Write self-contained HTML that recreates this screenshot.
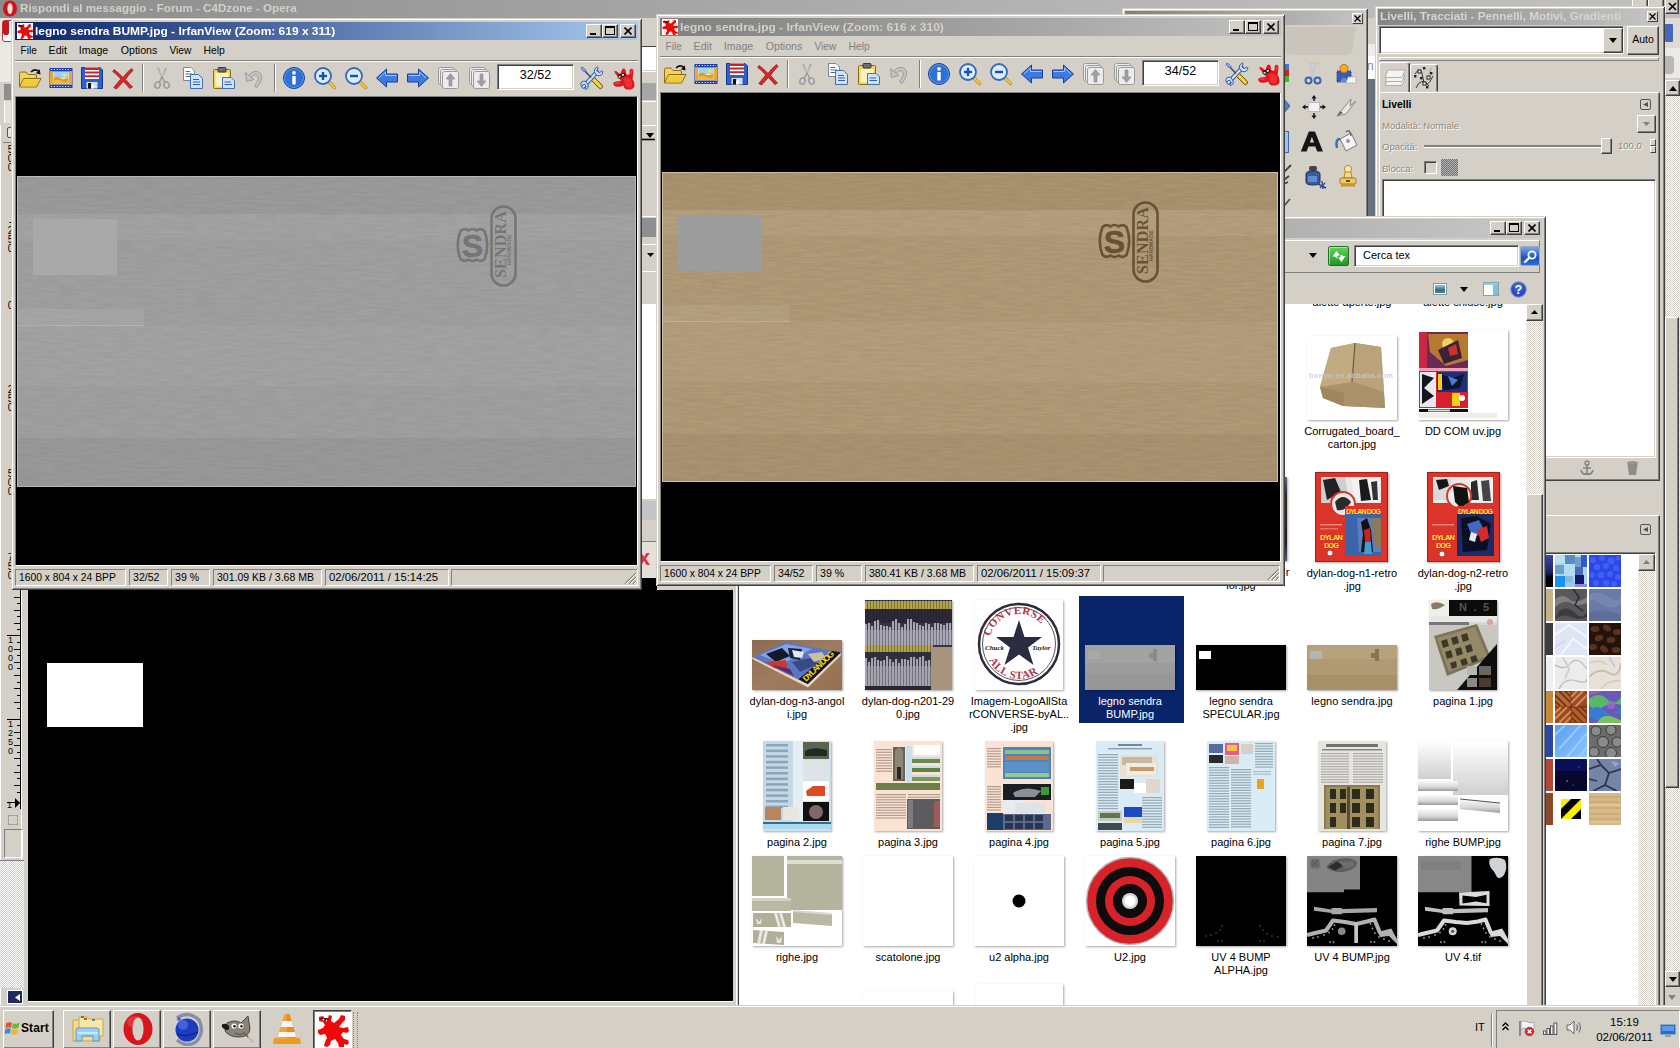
<!DOCTYPE html>
<html lang="it"><head><meta charset="utf-8"><title>Desktop</title>
<style>
html,body{margin:0;padding:0}
body{width:1680px;height:1048px;overflow:hidden;position:relative;background:#d4d0c8;font-family:"Liberation Sans",sans-serif;font-size:11px;line-height:13px;color:#000}
div,span,svg{position:absolute;box-sizing:border-box}
.t{white-space:nowrap}
.win{background:#d4d0c8;box-shadow:inset 1px 1px #d4d0c8,inset -1px -1px #404040,inset 2px 2px #fff,inset -2px -2px #808080}
.tb{height:18px;color:#fff;font-weight:bold}
.tb.act{background:linear-gradient(90deg,#0a246a,#a6caf0)}
.tb.ina{background:linear-gradient(90deg,#808080,#c0c0c0);color:#d4d0c8}
.btn{background:#d4d0c8;border:1px solid;border-color:#fff #404040 #404040 #fff;box-shadow:inset -1px -1px #808080}
.sunk{border:1px solid;border-color:#808080 #fff #fff #808080}
.sunk2{border:1px solid;border-color:#808080 #fff #fff #808080;box-shadow:inset 1px 1px #404040,inset -1px -1px #d4d0c8}
.cell{border:1px solid;border-color:#808080 #fff #fff #808080;height:17px;padding:1px 0 0 3px;white-space:nowrap;overflow:hidden}
.menu span{position:static}
.lbl{text-align:center;width:112px;line-height:13px;font-size:11px}
.th{box-shadow:1px 1px 2px rgba(0,0,0,.35)}
</style></head><body>
<!-- Opera background window -->
<div id="opera" style="left:0;top:0;width:1680px;height:1048px;background:#d4d0c8">
  <div class="tb ina" style="left:0;top:0;width:1680px;height:18px;background:linear-gradient(90deg,#8c8c8c,#b8b8b8 70%,#c0c0c0)"></div>
  <svg style="left:2px;top:0" width="16" height="17" viewBox="0 0 16 17"><ellipse cx="8" cy="8.5" rx="7" ry="8" fill="#d2121b"/><ellipse cx="8" cy="8.5" rx="2.6" ry="5.6" fill="#f4dcdc"/></svg>
  <div class="t" style="left:20px;top:2px;color:#d4d0c8;font-weight:bold;font-size:11px;transform:scaleX(1.055);transform-origin:0 0">Rispondi al messaggio - Forum - C4Dzone - Opera</div>
  <!-- opera top-right buttons -->
  <div class="btn" style="left:1632px;top:-3px;width:16px;height:17px"></div>
  <div class="btn" style="left:1648px;top:-3px;width:16px;height:17px"></div>
  <div class="btn" style="left:1665px;top:-3px;width:14px;height:17px"><svg style="left:2px;top:4px" width="9" height="9" viewBox="0 0 9 9"><path d="M1 1L8 8M8 1L1 8" stroke="#000" stroke-width="1.7"/></svg></div>
  <!-- left strip bits -->
  <div style="left:0;top:18px;width:12px;height:28px;background:#e8e6e0"></div>
  <div style="left:2px;top:20px;width:10px;height:22px;background:#fff;border-radius:3px 0 0 3px;border:1px solid #b33"><div style="left:0;top:0;width:6px;height:14px;border:3px solid #c8161d;border-top:0;border-radius:0 0 6px 6px"></div></div>
  <div style="left:0;top:46px;width:12px;height:36px;background:#ece9e3"></div>
  <div style="left:4px;top:84px;width:8px;height:16px;background:#8f8f8f"></div>
  <div style="left:4px;top:101px;width:8px;height:22px;background:#e4e1da;border-left:1px solid #fff"></div>
  <!-- right strip bits -->
  <div style="left:1664px;top:18px;width:16px;height:30px;background:#dedbd4"></div>
  <div style="left:1665px;top:24px;width:8px;height:18px;background:#4467b8;border-radius:1px"></div>
  <div style="left:1664px;top:48px;width:16px;height:30px;background:#eceae6"></div>
  <div style="left:1664px;top:56px;width:10px;height:18px;background:#b9b8b5;border-radius:0 4px 4px 0"></div>
  <div style="left:1666px;top:96px;width:14px;height:876px;background:repeating-conic-gradient(#fff 0 25%,#d4d0c8 0 50%) 0 0/2px 2px"></div>
  <div class="btn" style="left:1665px;top:80px;width:15px;height:16px"><svg style="left:3px;top:5px" width="8" height="5" viewBox="0 0 8 5"><path d="M0 5L4 0L8 5Z" fill="#000"/></svg></div>
  <div class="btn" style="left:1665px;top:317px;width:14px;height:471px"></div>
  <div class="btn" style="left:1665px;top:971px;width:15px;height:16px"><svg style="left:3px;top:5px" width="8" height="5" viewBox="0 0 8 5"><path d="M0 0L4 5L8 0Z" fill="#000"/></svg></div>
  <svg style="left:1668px;top:995px" width="8" height="5" viewBox="0 0 8 5"><path d="M0 0L4 5L8 0Z" fill="#808080"/></svg>
</div>
<!-- GIMP image window (behind) -->
<div id="gimpimg" style="left:0;top:125px;width:736px;height:881px;background:#d4d0c8">
  <div style="left:0;top:0;width:3px;height:881px;background:#d4d0c8;border-left:1px solid #fff"></div>
  <!-- ruler -->
  <div style="left:20px;top:0;width:1px;height:684px;background:#000"></div>
  <div style="left:21px;top:0;width:7px;height:876px;background:#d4d0c8;border-left:1px solid #fff"></div>
  <div style="left:28px;top:465px;width:705px;height:411px;background:#000"></div>
  <div style="left:47px;top:538px;width:96px;height:64px;background:#fff"></div>
  <div style="left:28px;top:876px;width:705px;height:1px;background:#fff"></div>
  <div style="left:733px;top:465px;width:3px;height:416px;background:#d4d0c8"></div>
  <svg style="left:0;top:0" width="21" height="690" viewBox="0 0 21 690">
    <g stroke="#000" stroke-width="1" shape-rendering="crispEdges">
      <path d="M14 472.5H20M14 485.5H20M17 478.5H20M17 491.5H20M14 498.5H20M17 504.5H20M7 510.5H20M17 517.5H20M14 524.5H20M17 530.5H20M14 537.5H20M17 543.5H20M14 550.5H20M17 557.5H20M14 563.5H20M17 570.5H20M14 577.5H20M17 583.5H20M7 594.5H20M17 600.5H20M14 607.5H20M17 613.5H20M14 620.5H20M17 627.5H20M14 633.5H20M17 640.5H20M14 647.5H20M17 653.5H20M14 660.5H20M17 667.5H20M7 677.5H20"/>
    </g>
    <path d="M15 673L20 678L15 683Z" fill="#000"/>
  </svg>
  <div class="t" style="left:7px;top:511px;width:7px;font-size:9px;line-height:9px;white-space:normal;word-break:break-all;text-align:center">1000</div>
  <div class="t" style="left:7px;top:595px;width:7px;font-size:9px;line-height:9px;white-space:normal;word-break:break-all;text-align:center">1250</div>
  <div class="t" style="left:7px;top:676px;width:7px;font-size:9px;line-height:9px">1</div>
  <!-- upper ruler numbers partially hidden -->
  <div class="t" style="left:7px;top:20px;width:7px;font-size:10px;line-height:9px;white-space:normal;word-break:break-all;text-align:center">500</div>
  <div class="t" style="left:7px;top:92px;width:7px;font-size:10px;line-height:9px;white-space:normal;word-break:break-all;text-align:center">-250</div>
  <div class="t" style="left:7px;top:176px;width:7px;font-size:10px;line-height:9px;white-space:normal;word-break:break-all;text-align:center">0</div>
  <div class="t" style="left:7px;top:260px;width:7px;font-size:10px;line-height:9px;white-space:normal;word-break:break-all;text-align:center">250</div>
  <div class="t" style="left:7px;top:344px;width:7px;font-size:10px;line-height:9px;white-space:normal;word-break:break-all;text-align:center">500</div>
  <div class="t" style="left:7px;top:428px;width:7px;font-size:10px;line-height:9px;white-space:normal;word-break:break-all;text-align:center">750</div>
  <div style="left:3px;top:17px;width:9px;height:1px;background:#808080"></div>
  <div style="left:7px;top:2px;width:6px;height:11px;border:1px solid #555;border-radius:2px;background:#e8e6e0"></div>
  <!-- below ruler -->
  <div style="left:8px;top:690px;width:10px;height:10px;border:1px dashed #fff;outline:1px dashed #999;outline-offset:-1px"></div>
  <div style="left:4px;top:704px;width:19px;height:29px;border:1px solid;border-color:#808080 #fff #fff #808080"></div>
  <div style="left:0;top:735px;width:24px;height:128px;background:repeating-conic-gradient(#fff 0 25%,#d4d0c8 0 50%) 0 0/2px 2px;border-top:1px solid #808080"></div>
  <div style="left:7px;top:865px;width:16px;height:14px;background:#1f2a5e;border:1px solid #fff"><svg style="left:7px;top:3px" width="5" height="7" viewBox="0 0 5 7"><path d="M5 0L0 3.5L5 7Z" fill="#fff"/></svg></div>
</div>
<!-- strip visible between the two IrfanView windows -->
<div id="gap" style="left:641px;top:18px;width:16px;height:572px;background:#d4d0c8;overflow:hidden">
  <div style="left:1px;top:28px;width:14px;height:1px;background:#404040"></div><div style="left:1px;top:29px;width:15px;height:23px;background:#fff"></div>
  <div style="left:0;top:53px;width:16px;height:1px;background:#fff"></div>
  <div style="left:1px;top:65px;width:15px;height:17px;background:#a6a6a6"></div>
  <div style="left:0;top:83px;width:16px;height:1px;background:#fff"></div>
  <div style="left:0;top:107px;width:16px;height:1px;background:#fff"></div>
  <svg style="left:0;top:114px" width="16" height="10" viewBox="0 0 16 10"><path d="M5 1H13L9 6Z" fill="#000"/><path d="M0 7.5H14" stroke="#000" stroke-width="1.6"/></svg>
  <div style="left:0;top:198px;width:16px;height:1px;background:#fff"></div>
  <div style="left:1px;top:200px;width:15px;height:19px;background:#8f8f93"></div>
  <div style="left:0;top:226px;width:16px;height:1px;background:#fff"></div>
  <svg style="left:6px;top:235px" width="7" height="4" viewBox="0 0 7 4"><path d="M0 0H7L3.5 4Z" fill="#000"/></svg>
  <div style="left:0;top:253px;width:16px;height:1px;background:#fff"></div>
  <div style="left:1px;top:286px;width:14px;height:195px;background:#fff"></div>
  <div style="left:1px;top:483px;width:15px;height:19px;background:#c3c3c8"></div>
  <div style="left:0;top:523px;width:16px;height:1px;background:#808080"></div>
  <div style="left:0;top:524px;width:16px;height:36px;background:#e6dfd8"></div>
  <div class="t" style="left:-3px;top:527px;color:#e0303a;font-weight:bold;font-size:22px;line-height:26px">x</div>
  <div style="left:0;top:560px;width:16px;height:12px;background:#000"></div>
</div>
<!-- strip between toolbox and dock -->
<div style="left:1367px;top:18px;width:8px;height:200px;background:#d4d0c8"></div>
<div style="left:1367px;top:44px;width:8px;height:12px;background:#efede8"></div>
<div style="left:1367px;top:56px;width:8px;height:23px;background:#fff"></div>
<div class="t" style="left:1367px;top:60px;width:7px;overflow:hidden;font-size:12px;color:#889">n</div>
<div style="left:1368px;top:79px;width:7px;height:137px;background:#67717f"></div>
<!-- GIMP toolbox window -->
<div id="tbox" class="win" style="left:1122px;top:8px;width:246px;height:420px">
  <div class="tb ina" style="left:3px;top:3px;width:239px;height:14px;background:linear-gradient(90deg,#808080,#c4c4c4)"></div><div id="tbin" style="left:58px;top:-2px;width:188px;height:400px">
  <div class="btn" style="left:172px;top:7px;width:11px;height:11px;box-shadow:none;border-color:#fff #404040 #404040 #fff"><svg style="left:1px;top:1px" width="7" height="7" viewBox="0 0 7 7"><path d="M.5 .5L6.5 6.5M6.5 .5L.5 6.5" stroke="#000" stroke-width="1.2"/></svg></div>
  <!-- wilber drop area -->
  <div style="left:104px;top:21px;width:70px;height:28px;background:#c9c5bd;border-radius:0 0 6px 10px;transform:skewX(-8deg)"></div>
  <!-- partial left column icons -->
  <div style="left:104px;top:58px;width:5px;height:6px;background:#3c78d8"></div>
  <div style="left:104px;top:64px;width:5px;height:6px;background:#d82020"></div>
  <div style="left:104px;top:70px;width:5px;height:6px;background:#40b830"></div>
  <svg style="left:104px;top:93px" width="6" height="14" viewBox="0 0 6 14"><path d="M0 0L6 7L0 14Z" fill="#4a80d0" stroke="#2a5090" stroke-width=".8"/></svg>
  <div style="left:104px;top:125px;width:5px;height:22px;background:#9cc4f0;border:1px solid #3a6ab0;border-left:0"></div>
  <svg style="left:104px;top:158px" width="8" height="22" viewBox="0 0 8 22"><path d="M0 8L7 1M0 16L5 12M0 20L4 18" stroke="#444" stroke-width="1.8"/></svg>
  <svg style="left:104px;top:192px" width="8" height="14" viewBox="0 0 8 14"><path d="M0 8L6 1" stroke="#555" stroke-width="1.8"/></svg>
  <!-- scissors -->
  <svg style="left:122px;top:56px" width="24" height="24" viewBox="0 0 24 24"><path d="M7 1L12 15M14 2L9 15" stroke="#c8c8d0" stroke-width="2.2"/><path d="M9 2Q14 0 19 2" stroke="#e0b030" stroke-width="1" stroke-dasharray="1.5 1.2" fill="none"/><circle cx="6.5" cy="18.5" r="3" fill="none" stroke="#3a62b0" stroke-width="2"/><circle cx="15.5" cy="18.5" r="3" fill="none" stroke="#3a62b0" stroke-width="2"/></svg>
  <!-- foreground select -->
  <svg style="left:155px;top:56px" width="24" height="24" viewBox="0 0 24 24"><rect x="2" y="9" width="14" height="11" fill="#3a5ab8" stroke="#223a80" stroke-dasharray="1.5 1"/><circle cx="9" cy="6.5" r="4.2" fill="#f0a830" stroke="#c07818"/><path d="M5 20Q9 11 13 20Z" fill="#5a8ae0"/><path d="M13 15H21V21H11Z" fill="#f4f4f4" stroke="#aaa" stroke-width=".6"/></svg>
  <!-- move -->
  <svg style="left:121px;top:88px" width="26" height="26" viewBox="0 0 26 26"><rect x="7.5" y="8.5" width="11" height="9" fill="#f2f2f2" stroke="#bbb"/><path d="M13 1L10.5 4.5H15.5ZM13 25L10.5 21.5H15.5ZM1 13L4.5 10.5V15.5ZM25 13L21.5 10.5V15.5Z" fill="#111"/><path d="M13 4V7M13 19V22M4 13H7M19 13H22" stroke="#111" stroke-width="1.4"/></svg>
  <!-- crop/knife -->
  <svg style="left:155px;top:90px" width="24" height="24" viewBox="0 0 24 24"><path d="M2 20L16 3L15 10L21 5L11 18Z" fill="#e8e8e8" stroke="#888" stroke-width="1"/><path d="M2 20L8 17L5 15Z" fill="#666"/></svg>
  <!-- text A -->
  <div class="t" style="left:121px;top:121px;font-family:'Liberation Sans',sans-serif;font-weight:bold;font-size:27px;line-height:30px;color:#151515;-webkit-text-stroke:1.2px #151515;transform:scaleX(1.12);transform-origin:0 0">A</div>
  <!-- bucket -->
  <svg style="left:154px;top:122px" width="26" height="26" viewBox="0 0 26 26"><path d="M6 11L17 5L23 17L12 23Z" fill="#f4f4f4" stroke="#777"/><path d="M3 20Q1 11 6 11" fill="none" stroke="#3a6ab8" stroke-width="2.4"/><path d="M12 4Q16 0 17 8" fill="none" stroke="#555" stroke-width="1.2"/><circle cx="14" cy="13" r="2" fill="#999"/></svg>
  <!-- ink -->
  <svg style="left:122px;top:158px" width="26" height="26" viewBox="0 0 26 26"><rect x="7" y="2" width="8" height="5" rx="2" fill="#444"/><path d="M4 10Q4 7 11 7Q18 7 18 10V18Q18 21 11 21Q4 21 4 18Z" fill="#3a5a98" stroke="#1e2e58"/><rect x="6" y="12" width="9" height="6" fill="#6a9ae0" opacity=".8"/><path d="M16 20L24 24M18 24L23 19M20 17L21 25" stroke="#2a4a98" stroke-width="1.4"/></svg>
  <!-- stamp -->
  <svg style="left:157px;top:158px" width="22" height="24" viewBox="0 0 22 24"><circle cx="11" cy="5" r="3.6" fill="#f6e8b8" stroke="#b88a28"/><path d="M8 8H14L15 14H7Z" fill="#f0d890" stroke="#b88a28"/><rect x="3" y="14" width="16" height="6" rx="1.5" fill="#f0c860" stroke="#a87818"/><rect x="4" y="20" width="14" height="2.5" fill="#c89828"/><path d="M9 17H13" stroke="#333" stroke-width="1.6"/></svg>
</div></div>
<!-- Livelli dock window -->
<div id="dock" class="win" style="left:1375px;top:6px;width:290px;height:1004px">
  <div class="tb ina" style="left:3px;top:3px;width:282px;height:16px;background:linear-gradient(90deg,#858585,#c6c6c6)"></div>
  <div class="t" style="left:5px;top:4px;font-weight:bold;font-size:11px;color:#d8d5cd;transform:scaleX(1.066);transform-origin:0 0">Livelli, Tracciati - Pennelli, Motivi, Gradienti</div>
  <div class="btn" style="left:272px;top:5px;width:11px;height:11px;box-shadow:none"><svg style="left:1px;top:1px" width="7" height="7" viewBox="0 0 7 7"><path d="M.5 .5L6.5 6.5M6.5 .5L.5 6.5" stroke="#000" stroke-width="1.2"/></svg></div>
  <!-- combo -->
  <div class="sunk2" style="left:4px;top:20px;width:245px;height:28px;background:#fff"></div>
  <div class="btn" style="left:228px;top:22px;width:20px;height:25px"><svg style="left:5px;top:9px" width="8" height="5" viewBox="0 0 8 5"><path d="M0 0H8L4 5Z" fill="#000"/></svg></div>
  <div class="btn" style="left:252px;top:20px;width:32px;height:29px;text-align:center;line-height:25px;font-size:10.5px">Auto</div>
  <div style="left:4px;top:51px;width:280px;height:4px;border:1px solid;border-color:#fff #808080 #808080 #fff"></div>
  <!-- tabs -->
  <div style="left:4px;top:56px;width:31px;height:31px;background:#d4d0c8;border:1px solid;border-color:#fff #404040 transparent #fff;border-radius:3px 3px 0 0;box-shadow:inset -1px 0 #808080"></div>
  <svg style="left:9px;top:62px" width="22" height="20" viewBox="0 0 22 20"><g fill="#f4f4f4" stroke="#a8a8a8" stroke-width=".9"><path d="M1 17.5L4 11H21L18 17.5Z"/><path d="M1 13.5L4 7H21L18 13.5Z"/><path d="M1 9.5L4 2H21L18 9.5Z"/></g></svg>
  <div style="left:35px;top:58px;width:28px;height:28px;background:#d4d0c8;border:1px solid;border-color:#fff #404040 transparent #fff;border-radius:3px 3px 0 0;box-shadow:inset -1px 0 #808080"></div>
  <svg style="left:38px;top:60px" width="22" height="24" viewBox="0 0 22 24"><path d="M2 8Q8 -2 10 12T20 10" fill="none" stroke="#333" stroke-width="1"/><path d="M3 22Q8 10 16 20" fill="none" stroke="#333" stroke-width="1"/><path d="M18 2L14 14" stroke="#999" stroke-width=".8"/><g fill="#fff" stroke="#222" stroke-width="1"><rect x="5" y="4" width="3" height="3"/><rect x="14" y="10" width="3" height="3"/><rect x="10" y="16" width="3" height="3"/></g><g fill="#222"><rect x="10" y="1" width="2.4" height="2.4"/><rect x="1" y="9" width="2.4" height="2.4"/><rect x="7" y="11" width="2.4" height="2.4"/><rect x="17" y="6" width="2.4" height="2.4"/><rect x="13" y="20" width="2.4" height="2.4"/></g></svg>
  <!-- layers panel -->
  <div style="left:4px;top:86px;width:281px;height:389px;border:1px solid;border-color:#fff #404040 #404040 #fff;box-shadow:inset -1px -1px #808080"></div>
  <div class="t" style="left:7px;top:92px;font-weight:bold;font-size:10.4px">Livelli</div>
  <div style="left:265px;top:93px;width:11px;height:11px;border:1px solid #555;border-radius:2px"><svg style="left:2px;top:2px" width="5" height="5" viewBox="0 0 5 5"><path d="M5 0L0 2.5L5 5Z" fill="#555"/></svg></div>
  <div class="t" style="left:7px;top:113px;color:#8a8782;text-shadow:1px 1px #fff;font-size:9.5px">Modalità: Normale</div>
  <div class="btn" style="left:262px;top:109px;width:19px;height:18px"><svg style="left:5px;top:6px" width="7" height="4" viewBox="0 0 7 4"><path d="M0 0H7L3.5 4Z" fill="#808080"/></svg></div>
  <div class="t" style="left:7px;top:134px;color:#8a8782;text-shadow:1px 1px #fff;font-size:9.5px">Opacità:</div>
  <div style="left:49px;top:139px;width:178px;height:2px;background:#808080;border-bottom:1px solid #fff;height:3px"></div>
  <div class="btn" style="left:226px;top:132px;width:11px;height:16px"></div>
  <div class="t" style="left:243px;top:133px;color:#8a8782;text-shadow:1px 1px #fff;font-size:9.5px">100,0</div>
  <div class="btn" style="left:275px;top:133px;width:6px;height:7px;box-shadow:none"></div>
  <div class="btn" style="left:275px;top:140px;width:6px;height:7px;box-shadow:none"></div>
  <div class="t" style="left:7px;top:156px;color:#8a8782;text-shadow:1px 1px #fff;font-size:9.5px">Blocca:</div>
  <div class="sunk2" style="left:49px;top:155px;width:13px;height:13px;background:#d4d0c8"></div>
  <div style="left:66px;top:153px;width:17px;height:17px;background:repeating-conic-gradient(#707070 0 25%,#b4b4b4 0 50%) 0 0/2px 2px"></div>
  <div class="sunk2" style="left:7px;top:173px;width:274px;height:279px;background:#fff"></div>
  <!-- panel bottom buttons -->
  <svg style="left:205px;top:454px" width="14" height="16" viewBox="0 0 14 16" opacity=".55"><circle cx="7" cy="3" r="2" fill="none" stroke="#444" stroke-width="1.4"/><path d="M7 5V14M3 8H11M1 10Q2 15 7 14Q12 15 13 10" fill="none" stroke="#444" stroke-width="1.6"/></svg>
  <svg style="left:251px;top:454px" width="13" height="16" viewBox="0 0 13 16" opacity=".55"><ellipse cx="6.5" cy="3" rx="5.5" ry="2" fill="#666"/><path d="M1.5 4L3 15H10L11.500 4Z" fill="#555"/></svg>
  <!-- patterns panel -->
  <div style="left:4px;top:509px;width:281px;height:495px;border:1px solid;border-color:#fff #404040 #404040 #fff;box-shadow:inset -1px -1px #808080"></div>
  <div style="left:265px;top:518px;width:11px;height:11px;border:1px solid #555;border-radius:2px"><svg style="left:2px;top:2px" width="5" height="5" viewBox="0 0 5 5"><path d="M5 0L0 2.5L5 5Z" fill="#555"/></svg></div>
  <div class="sunk2" style="left:7px;top:546px;width:274px;height:456px;background:#fff"></div>
  <div style="left:263px;top:548px;width:17px;height:452px;background:repeating-conic-gradient(#fff 0 25%,#d4d0c8 0 50%) 0 0/2px 2px"></div>
  <div class="btn" style="left:263px;top:548px;width:17px;height:17px"><svg style="left:4px;top:5px" width="7" height="4" viewBox="0 0 7 4"><path d="M0 4L3.5 0L7 4Z" fill="#808080"/></svg></div>
</div>
<!-- GIMP pattern swatches -->
<div style="left:1555px;top:555px;width:32px;height:32px;overflow:hidden"><svg width="32" height="32" viewBox="0 0 32 32" preserveAspectRatio="none"><rect width="32" height="32" fill="#a8d8ea"/><rect x="0" y="0" width="10" height="8" fill="#b8e0ee"/><rect x="10" y="0" width="10" height="9" fill="#5a8ac0"/><rect x="20" y="2" width="8" height="10" fill="#7a9ad0"/><rect x="26" y="0" width="6" height="12" fill="#2a5ad8"/><rect x="0" y="10" width="9" height="9" fill="#6aa0d0"/><rect x="9" y="9" width="11" height="12" fill="#b4dcf0"/><rect x="20" y="12" width="8" height="8" fill="#4a6ab8"/><rect x="0" y="21" width="10" height="11" fill="#1e90f0"/><rect x="10" y="21" width="8" height="6" fill="#8ab8e0"/><rect x="20" y="20" width="9" height="9" fill="#16186a"/><rect x="10" y="27" width="10" height="5" fill="#9ac8e8"/><rect x="20" y="29" width="12" height="3" fill="#8a8ae0"/></svg></div>
<div style="left:1589px;top:555px;width:32px;height:32px;overflow:hidden"><svg width="32" height="32" viewBox="0 0 32 32" preserveAspectRatio="none"><rect width="32" height="32" fill="#2a48e8"/><g fill="#4a68f8" opacity=".7"><circle cx="4" cy="5" r="3"/><circle cx="13" cy="3" r="3"/><circle cx="22" cy="6" r="3.4"/><circle cx="29" cy="3" r="2.6"/><circle cx="8" cy="12" r="3.2"/><circle cx="17" cy="11" r="3"/><circle cx="27" cy="13" r="3"/><circle cx="3" cy="20" r="3"/><circle cx="12" cy="20" r="3.4"/><circle cx="21" cy="19" r="3"/><circle cx="29" cy="22" r="3"/><circle cx="7" cy="28" r="3"/><circle cx="17" cy="28" r="3.2"/><circle cx="25" cy="29" r="3"/></g></svg></div>
<div style="left:1555px;top:589px;width:32px;height:32px;overflow:hidden"><svg width="32" height="32" viewBox="0 0 32 32" preserveAspectRatio="none"><rect width="32" height="32" fill="#58585a"/><path d="M0 10Q8 4 14 10T32 8V14Q22 18 16 14T0 18Z" fill="#808084"/><path d="M4 22Q12 16 20 24T32 22V28Q24 32 16 28T0 30Z" fill="#3c3c40"/><path d="M18 0L24 8L20 16L28 22" stroke="#2a2a2c" stroke-width="1.5" fill="none"/></svg></div>
<div style="left:1589px;top:589px;width:32px;height:32px;overflow:hidden"><svg width="32" height="32" viewBox="0 0 32 32" preserveAspectRatio="none"><rect width="32" height="32" fill="#6a7aa6"/><path d="M0 6Q10 0 20 8T32 4V16Q20 22 10 14T0 18Z" fill="#7c8cb8" opacity=".7"/><path d="M0 24Q12 18 32 26V32H0Z" fill="#5a6a94" opacity=".7"/></svg></div>
<div style="left:1555px;top:623px;width:32px;height:32px;overflow:hidden"><svg width="32" height="32" viewBox="0 0 32 32" preserveAspectRatio="none"><rect width="32" height="32" fill="#dfe4f6"/><path d="M0 12L14 2L32 14M6 32L18 16L32 26" stroke="#f6f8ff" stroke-width="2" fill="none"/><path d="M0 24L10 18" stroke="#c8d0ec" stroke-width="1.4"/></svg></div>
<div style="left:1589px;top:623px;width:32px;height:32px;overflow:hidden"><svg width="32" height="32" viewBox="0 0 32 32" preserveAspectRatio="none"><rect width="32" height="32" fill="#24120c"/><g fill="#5a3220"><ellipse cx="6" cy="6" rx="4.4" ry="3"/><ellipse cx="18" cy="5" rx="4.4" ry="3" transform="rotate(30 18 5)"/><ellipse cx="28" cy="9" rx="4" ry="3"/><ellipse cx="10" cy="15" rx="4.4" ry="3" transform="rotate(-20 10 15)"/><ellipse cx="22" cy="17" rx="4.4" ry="3"/><ellipse cx="4" cy="24" rx="4" ry="3"/><ellipse cx="15" cy="26" rx="4.4" ry="3" transform="rotate(40 15 26)"/><ellipse cx="27" cy="27" rx="4.4" ry="3"/></g></svg></div>
<div style="left:1555px;top:657px;width:32px;height:32px;overflow:hidden"><svg width="32" height="32" viewBox="0 0 32 32" preserveAspectRatio="none"><rect width="32" height="32" fill="#ececec"/><path d="M0 8Q10 14 16 6T32 12M4 32Q10 20 22 24T32 18" stroke="#b8b8b8" stroke-width="1.2" fill="none"/><path d="M8 0L14 12L10 22" stroke="#d0d0d0" stroke-width="2" fill="none"/></svg></div>
<div style="left:1589px;top:657px;width:32px;height:32px;overflow:hidden"><svg width="32" height="32" viewBox="0 0 32 32" preserveAspectRatio="none"><rect width="32" height="32" fill="#e6e2da"/><path d="M0 20Q10 10 20 16T32 6" stroke="#c8c0b0" stroke-width="2" fill="none"/><path d="M0 6Q12 2 18 8M12 32Q20 22 32 24" stroke="#d4cec0" stroke-width="1.6" fill="none"/><path d="M20 0L26 10" stroke="#b8c0d0" stroke-width="1.4"/></svg></div>
<div style="left:1555px;top:691px;width:32px;height:32px;overflow:hidden"><svg width="32" height="32" viewBox="0 0 32 32" preserveAspectRatio="none"><rect width="32" height="32" fill="#9a4a26"/><g stroke="#5a2410" stroke-width=".8"><path d="M0 0L16 0L16 16L0 16Z" fill="#b86a38"/><path d="M16 16H32V32H16Z" fill="#b4602e"/></g><path d="M0 4L12 16M0 10L6 16M4 0L16 12M10 0L16 6" stroke="#7a3818" stroke-width="2"/><path d="M16 4L28 16M16 10L22 16M20 0L32 12" stroke="#d88a50" stroke-width="2" transform="translate(0,0) scale(1,-1) translate(0,-16)"/><path d="M16 20L28 32M16 26L22 32M20 16L32 28M26 16L32 22" stroke="#7a3818" stroke-width="2"/><path d="M0 28L12 16M0 22L6 16M4 32L16 20M10 32L16 26" stroke="#d88a50" stroke-width="2"/></svg></div>
<div style="left:1589px;top:691px;width:32px;height:32px;overflow:hidden"><svg width="32" height="32" viewBox="0 0 32 32" preserveAspectRatio="none"><rect width="32" height="32" fill="#6a5ab8"/><path d="M0 8Q10 0 18 8T32 6V14Q22 10 14 16T0 14Z" fill="#58b868"/><path d="M0 20Q8 12 16 20T32 16V24Q24 20 16 26T0 26Z" fill="#3a7ad0"/><path d="M8 32Q14 22 24 26T32 30V32Z" fill="#78c060"/><path d="M0 0H12Q6 4 0 4Z" fill="#a05ab0"/><circle cx="22" cy="14" r="4" fill="#9a6ac8" opacity=".8"/></svg></div>
<div style="left:1555px;top:725px;width:32px;height:32px;overflow:hidden"><svg width="32" height="32" viewBox="0 0 32 32" preserveAspectRatio="none"><defs><linearGradient id="sk1" x1="0" y1="0" x2="1" y2="1"><stop offset="0" stop-color="#5a9ef0"/><stop offset="1" stop-color="#8ec4ff"/></linearGradient></defs><rect width="32" height="32" fill="url(#sk1)"/><path d="M0 10L10 0M4 24L26 0M12 32L32 8M24 32L32 22" stroke="#b4d8ff" stroke-width="2" opacity=".6"/></svg></div>
<div style="left:1589px;top:725px;width:32px;height:32px;overflow:hidden"><svg width="32" height="32" viewBox="0 0 32 32" preserveAspectRatio="none"><rect width="32" height="32" fill="#6c6c6c"/><g fill="#8a8a8a" stroke="#3a3a3a" stroke-width="1"><circle cx="7" cy="6" r="5"/><circle cx="22" cy="5" r="5"/><circle cx="14" cy="17" r="5.5"/><circle cx="28" cy="17" r="5"/><circle cx="5" cy="27" r="5"/><circle cx="22" cy="28" r="5.5"/></g></svg></div>
<div style="left:1555px;top:759px;width:32px;height:32px;overflow:hidden"><svg width="32" height="32" viewBox="0 0 32 32" preserveAspectRatio="none"><rect width="32" height="32" fill="#06062e"/><rect y="0" width="32" height="12" fill="#0a1058"/><circle cx="12" cy="22" r=".8" fill="#aab"/><circle cx="24" cy="8" r=".6" fill="#99b"/><circle cx="18" cy="26" r=".6" fill="#889"/></svg></div>
<div style="left:1589px;top:759px;width:32px;height:32px;overflow:hidden"><svg width="32" height="32" viewBox="0 0 32 32" preserveAspectRatio="none"><rect width="32" height="32" fill="#7486a8"/><path d="M0 10L12 6L20 14L32 10M12 6L8 0M20 14L16 26L4 32M16 26L28 32" stroke="#2c3448" stroke-width="1.8" fill="none"/><path d="M0 20L8 22" stroke="#2c3448" stroke-width="1.4"/><path d="M22 2L30 4L26 8Z" fill="#94a6c8"/></svg></div>
<div style="left:1589px;top:793px;width:32px;height:32px;overflow:hidden"><svg width="32" height="32" viewBox="0 0 32 32" preserveAspectRatio="none"><rect width="32" height="32" fill="#d8b888"/><path d="M0 4H32M0 9H32M0 15H32M0 21H32M0 26H32" stroke="#c4a070" stroke-width="1.4" opacity=".7"/><path d="M0 12H32M0 29H32" stroke="#e8cca0" stroke-width="1.6" opacity=".8"/></svg></div>
<div style="left:1561px;top:799px;width:20px;height:20px;overflow:hidden"><svg width="20" height="20" viewBox="0 0 20 20"><rect width="20" height="20" fill="#f8f000"/><path d="M-2 12L12 -2L22 -2L-2 22ZM8 22L22 8V18L18 22Z" fill="#000"/></svg></div>
<div style="left:1546px;top:555px;width:7px;height:32px;background:linear-gradient(180deg,#3a4aa8,#1a2060 55%,#000 70%)"></div>
<div style="left:1546px;top:589px;width:7px;height:32px;background:#c8b088"></div>
<div style="left:1546px;top:623px;width:7px;height:32px;background:#3c3c3e"></div>
<div style="left:1546px;top:657px;width:7px;height:32px;background:#eeeeee"></div>
<div style="left:1546px;top:691px;width:7px;height:32px;background:#c8883a"></div>
<div style="left:1546px;top:725px;width:7px;height:32px;background:#2a48a0"></div>
<div style="left:1546px;top:759px;width:7px;height:32px;background:#b04838"></div>
<div style="left:1546px;top:793px;width:7px;height:32px;background:#8a4828"></div>
<!-- Explorer window -->
<div id="expl" class="win" style="left:735px;top:216px;width:811px;height:800px">
<div class="tb ina" style="left:4px;top:3px;width:803px;height:19px;background:linear-gradient(90deg,#808080,#c8c8c8)"></div>
<div class="btn" style="left:789px;top:5px;width:16px;height:14px"><svg style="left:3px;top:2px" width="8" height="8" viewBox="0 0 8 8"><path d="M0.5 0.5L7.5 7.5M7.5 0.5L0.5 7.5" stroke="#000" stroke-width="1.6"/></svg></div>
<div class="btn" style="left:771px;top:5px;width:16px;height:14px"><div style="left:2px;top:1px;width:10px;height:9px;border:1px solid #000;border-top-width:2px"></div></div>
<div class="btn" style="left:755px;top:5px;width:16px;height:14px"><div style="left:3px;top:8px;width:6px;height:2px;background:#000"></div></div>
<div style="left:4px;top:24px;width:801px;height:33px;border:1px solid;border-color:#fff #808080 #808080 #fff"></div>
<svg style="left:574px;top:37px" width="8" height="5" viewBox="0 0 8 5"><path d="M0 0H8L4 5Z" fill="#000"/></svg>
<div style="left:593px;top:30px;width:21px;height:20px;background:linear-gradient(180deg,#5fd45a,#1e9a22);border:1px solid #2a6a2a;border-radius:2px;box-shadow:inset 1px 1px rgba(255,255,255,.5)"><svg style="left:2px;top:2px" width="16" height="15" viewBox="0 0 16 15"><path d="M1.500 7.500L5.500 2L9 6.500H6.800L6 9.500L3.600 7.500Z" fill="#fff"/><path d="M14.500 7L10.500 13L7 8.500H9.200L10 5.500L12.400 7Z" fill="#fff"/></svg></div>
<div class="sunk2" style="left:619px;top:29px;width:165px;height:22px;background:#fff;font-size:11px;line-height:18px;padding-left:8px">Cerca tex</div>
<div style="left:785px;top:30px;width:20px;height:20px;background:linear-gradient(180deg,#7aa8ee,#1c4fc0 60%,#2a6ae0);border:1px solid #9ab;border-radius:2px"><svg style="left:2px;top:2px" width="15" height="15" viewBox="0 0 15 15"><circle cx="9" cy="6" r="3.6" fill="none" stroke="#fff" stroke-width="1.8"/><path d="M6.5 8.5L2 13" stroke="#fff" stroke-width="2.4" stroke-linecap="round"/></svg></div>
<div style="left:698px;top:67px;width:14px;height:12px;background:#fff;border:1px solid #7a9ac0"><div style="left:1px;top:1px;width:10px;height:8px;background:linear-gradient(180deg,#9cc8e8,#3a6a8a 60%,#5a8a5a)"></div></div>
<svg style="left:725px;top:71px" width="8" height="5" viewBox="0 0 8 5"><path d="M0 0H8L4 5Z" fill="#000"/></svg>
<div style="left:748px;top:66px;width:16px;height:14px;background:#fff;border:1px solid #7aa;"><div style="left:9px;top:2px;width:5px;height:10px;background:#7ec0d8"></div><div style="left:0;top:0;width:14px;height:2px;background:#9cd"></div></div>
<svg style="left:775px;top:65px" width="17" height="17" viewBox="0 0 17 17"><circle cx="8.5" cy="8.5" r="7.8" fill="#2a4cc0" stroke="#8a9ad0"/><circle cx="8.5" cy="6" r="5" fill="#5a7ae0" opacity=".5"/><text x="8.5" y="13" text-anchor="middle" font-family="Liberation Sans,sans-serif" font-weight="bold" font-size="12" fill="#fff">?</text></svg>
<div id="flist" style="left:3px;top:88px;width:788px;height:702px;background:#fff;overflow:hidden;border-left:1px solid #404040">
<div class="t lbl" style="left:557px;top:-8px">alette aperte.jpg</div>
<div class="t lbl" style="left:668px;top:-8px">alette chiuse.jpg</div>
<div class="t lbl" style="left:446px;top:262px">dylan-dog-n1-ante-r<br>ior.jpg</div>
<div class="th" style="left:568px;top:32px;width:90px;height:84px"><svg width="90" height="84" viewBox="0 0 90 84" preserveAspectRatio="none" ><rect width="90" height="84" fill="#fff"/><path d="M13 51L24 12L48 7L74 11L78 72L36 70Z" fill="#b39a73"/><path d="M24 12L48 7L46 46L13 51Z" fill="#c2aa83"/><path d="M48 7L74 11L77 56L46 46Z" fill="#baa27b"/><path d="M13 51L46 46L77 56L78 72L36 70L16 62Z" fill="#ab916a"/><path d="M13 51L16 62L36 70L37 57Z" fill="#a0865f"/><path d="M48 7L45 46" stroke="#6d5a3c" stroke-width="1.2"/><text x="2" y="42" font-family="Liberation Sans,sans-serif" font-weight="bold" font-size="7.5" fill="#c9c9cf" opacity=".85" textLength="84">bonyu.en.alibaba.com</text></svg></div>
<div class="t lbl" style="left:557px;top:121px;">Corrugated_board_<br>carton.jpg</div>
<div class="th" style="left:679px;top:26px;width:90px;height:90px"><svg width="90" height="90" viewBox="0 0 90 90" preserveAspectRatio="none" ><rect width="90" height="90" fill="#fff"/><rect x="1" y="2" width="49" height="36" fill="#6a2a58"/><path d="M10 4H50V30L28 36L12 22Z" fill="#b8792e"/><circle cx="30" cy="14" r="6" fill="#f0d060"/><path d="M20 20L40 10L44 28L26 34Z" fill="#3a2238"/><path d="M30 18L38 14L40 24L32 26Z" fill="#d03030"/><rect x="1" y="2" width="8" height="36" fill="#c62846"/><rect x="1" y="38" width="49" height="3" fill="#f4a0b0"/><rect x="1" y="41" width="49" height="37" fill="#d8202c"/><rect x="2" y="42" width="16" height="35" fill="#e8e8ee"/><path d="M4 44L16 48L6 58L16 66L4 74Z" fill="#151520"/><rect x="19" y="42" width="30" height="20" fill="#1c2f7a"/><path d="M22 44L34 48L46 44L42 58L26 60Z" fill="#0e1430"/><path d="M30 46L40 50L34 56Z" fill="#4a7ad0"/><rect x="20" y="44" width="4" height="16" fill="#f0d020"/><rect x="34" y="63" width="8" height="13" fill="#f0d020"/><circle cx="44" cy="68" r="3" fill="#fff"/><rect x="1" y="79" width="49" height="3" fill="#111"/><rect x="10" y="79.5" width="22" height="2" fill="#ddd"/><rect x="1" y="83" width="78" height="5" fill="#efeee6"/></svg></div>
<div class="t lbl" style="left:668px;top:121px;">DD COM uv.jpg</div>
<div class="th" style="left:576px;top:168px;width:73px;height:90px"><svg width="73" height="90" viewBox="0 0 73 90" preserveAspectRatio="none" ><rect width="73" height="90" fill="#dc3428"/><rect x="0" y="0" width="73" height="90" fill="none" stroke="#a81c1c" stroke-width="2"/><rect x="6" y="5" width="60" height="26" fill="#e9e9e9"/><path d="M6 5H30L34 31H6Z" fill="#cfcfcf"/><path d="M8 8L20 6L26 20L12 28Z" fill="#222"/><path d="M36 6H64V30H40Z" fill="#f2f2f2"/><path d="M44 8L52 7L56 28L46 29Z" fill="#1a1a1a"/><path d="M56 10L62 9L63 28L58 28Z" fill="#333"/><circle cx="28" cy="32" r="12" fill="#e8e8e8" stroke="#dc3428" stroke-width="2"/><path d="M20 30Q28 20 36 30Q30 40 22 38Z" fill="#2a2a2a"/><rect x="30" y="34" width="37" height="50" fill="#3d64a8"/><rect x="30" y="34" width="37" height="8" fill="#dc3428"/><text x="31" y="42" font-family="Liberation Sans,sans-serif" font-weight="bold" font-size="7" fill="#f3e23a" textLength="35">DYLAN DOG</text><path d="M42 46H66V80H44Z" fill="#5a7fbe"/><path d="M46 50L52 46L56 58L58 80H46L48 62Z" fill="#111"/><path d="M49 58L55 56L56 70H50Z" fill="#d02020"/><path d="M50 70H56L57 82H49Z" fill="#3aa0d8"/><path d="M56 46H66V76H60Z" fill="#8a7a5a"/><text x="5" y="68" font-family="Liberation Sans,sans-serif" font-weight="bold" font-size="7.5" fill="#f3e23a" textLength="23">DYLAN</text><text x="9" y="76" font-family="Liberation Sans,sans-serif" font-weight="bold" font-size="7.5" fill="#f3e23a" textLength="15">DOG</text><circle cx="15" cy="81" r="3" fill="#fff" stroke="#c33"/><rect x="5" y="52" width="22" height="1.5" fill="#f4b0a0" opacity=".7"/><rect x="5" y="56" width="18" height="1.5" fill="#f4b0a0" opacity=".5"/></svg></div>
<div class="t lbl" style="left:557px;top:263px;">dylan-dog-n1-retro<br>.jpg</div>
<div class="th" style="left:688px;top:168px;width:73px;height:90px"><svg width="73" height="90" viewBox="0 0 73 90" preserveAspectRatio="none" ><rect width="73" height="90" fill="#dc3428"/><rect x="0" y="0" width="73" height="90" fill="none" stroke="#a81c1c" stroke-width="2"/><rect x="6" y="5" width="60" height="26" fill="#e9e9e9"/><path d="M7 6H24V28H7Z" fill="#dadada"/><path d="M9 8L20 7L22 14L12 18Z" fill="#161616"/><path d="M40 6H66V30H42Z" fill="#f0f0f0"/><path d="M44 10L50 8L52 28L44 28Z" fill="#2a2a2a"/><path d="M54 9L62 8L64 29L56 29Z" fill="#444"/><circle cx="32" cy="24" r="12" fill="#ededed" stroke="#dc3428" stroke-width="2"/><path d="M26 14L40 16L42 30L34 36L28 30Z" fill="#111"/><rect x="30" y="34" width="37" height="50" fill="#1c2a66"/><rect x="30" y="34" width="37" height="8" fill="#dc3428"/><text x="31" y="42" font-family="Liberation Sans,sans-serif" font-weight="bold" font-size="7" fill="#f3e23a" textLength="35">DYLAN DOG</text><path d="M34 46L50 44L64 52L60 78L36 80Z" fill="#0b0f24"/><path d="M40 52L52 48L58 60L46 66Z" fill="#4068c0"/><path d="M50 58L60 54L62 66L54 70Z" fill="#d82a2a"/><path d="M44 60L50 62L48 70L42 68Z" fill="#e8e8f0"/><text x="5" y="68" font-family="Liberation Sans,sans-serif" font-weight="bold" font-size="7.5" fill="#f3e23a" textLength="23">DYLAN</text><text x="9" y="76" font-family="Liberation Sans,sans-serif" font-weight="bold" font-size="7.5" fill="#f3e23a" textLength="15">DOG</text><circle cx="15" cy="82" r="3" fill="#fff" stroke="#c33"/><rect x="5" y="52" width="22" height="1.5" fill="#f4b0a0" opacity=".7"/></svg></div>
<div class="t lbl" style="left:668px;top:263px;">dylan-dog-n2-retro<br>.jpg</div>
<div class="th" style="left:13px;top:336px;width:90px;height:50px"><svg width="90" height="50" viewBox="0 0 90 50" preserveAspectRatio="none" ><defs><linearGradient id="wd3" x1="0" y1="0" x2="1" y2="1"><stop offset="0" stop-color="#8a6a50"/><stop offset=".5" stop-color="#a07c5e"/><stop offset="1" stop-color="#94704f"/></linearGradient></defs><rect width="90" height="50" fill="url(#wd3)"/><path d="M0.500 19L56 47.500L88.700 15.500L88.700 12.400L55.800 44L0.500 17Z" fill="#e4d8bc"/><path d="M0.500 17L34 2L88.700 12.400L55.800 44Z" fill="#5a76c4"/><path d="M8 15L34 4L60 9L30 24Z" fill="#86a4e4"/><path d="M14 14L30 8L38 16L24 22Z" fill="#14182c"/><path d="M36 8L50 9L48 20L38 18Z" fill="#1c2038"/><path d="M40 10L52 12L50 18L42 17Z" fill="#dce8f4"/><path d="M14 22L34 20L36 30L22 28Z" fill="#c83a30"/><path d="M20 25L38 29L42 36L28 29.500Z" fill="#5a2a6a"/><path d="M40 22L58 18L66 24L48 32Z" fill="#3a4a86"/><path d="M56 14L70 12L74 18L62 22Z" fill="#c8c0a0"/><path d="M46.500 39.300L55.800 44L88.700 12.400L80 10.800Z" fill="#15131c"/><text transform="translate(54,42) rotate(-43.800)" font-family="Liberation Sans,sans-serif" font-weight="bold" font-size="8.500" fill="#f8d820" textLength="40">DYLAN DOG</text></svg></div>
<div class="t lbl" style="left:2px;top:391px;">dylan-dog-n3-angol<br>i.jpg</div>
<div class="th" style="left:126px;top:296px;width:87px;height:90px"><svg width="87" height="90" viewBox="0 0 87 90" preserveAspectRatio="none" ><rect width="87" height="90" fill="#3a3848"/><rect x="0" y="1" width="87" height="8" fill="#b4a648"/><rect x="0" y="9" width="87" height="14" fill="#2c2838"/><rect x="0" y="30" width="87" height="15" fill="#a8a8b4"/><rect x="0" y="24" width="2.200" height="6" fill="#b4b4c0" opacity=".9"/><rect x="3" y="23" width="2.200" height="7" fill="#b4b4c0" opacity=".9"/><rect x="6" y="26" width="2.200" height="4" fill="#b4b4c0" opacity=".9"/><rect x="9" y="21" width="2.200" height="9" fill="#b4b4c0" opacity=".9"/><rect x="12" y="20" width="2.200" height="10" fill="#b4b4c0" opacity=".9"/><rect x="15" y="25" width="2.200" height="5" fill="#b4b4c0" opacity=".9"/><rect x="18" y="26" width="2.200" height="4" fill="#b4b4c0" opacity=".9"/><rect x="21" y="26" width="2.200" height="4" fill="#b4b4c0" opacity=".9"/><rect x="24" y="27" width="2.200" height="3" fill="#b4b4c0" opacity=".9"/><rect x="27" y="21" width="2.200" height="9" fill="#b4b4c0" opacity=".9"/><rect x="30" y="19" width="2.200" height="11" fill="#b4b4c0" opacity=".9"/><rect x="33" y="23" width="2.200" height="7" fill="#b4b4c0" opacity=".9"/><rect x="36" y="27" width="2.200" height="3" fill="#b4b4c0" opacity=".9"/><rect x="39" y="24" width="2.200" height="6" fill="#b4b4c0" opacity=".9"/><rect x="42" y="19" width="2.200" height="11" fill="#b4b4c0" opacity=".9"/><rect x="45" y="19" width="2.200" height="11" fill="#b4b4c0" opacity=".9"/><rect x="48" y="22" width="2.200" height="8" fill="#b4b4c0" opacity=".9"/><rect x="51" y="23" width="2.200" height="7" fill="#b4b4c0" opacity=".9"/><rect x="54" y="25" width="2.200" height="5" fill="#b4b4c0" opacity=".9"/><rect x="57" y="26" width="2.200" height="4" fill="#b4b4c0" opacity=".9"/><rect x="60" y="23" width="2.200" height="7" fill="#b4b4c0" opacity=".9"/><rect x="63" y="24" width="2.200" height="6" fill="#b4b4c0" opacity=".9"/><rect x="66" y="27" width="2.200" height="3" fill="#b4b4c0" opacity=".9"/><rect x="69" y="23" width="2.200" height="7" fill="#b4b4c0" opacity=".9"/><rect x="72" y="23" width="2.200" height="7" fill="#b4b4c0" opacity=".9"/><rect x="75" y="24" width="2.200" height="6" fill="#b4b4c0" opacity=".9"/><rect x="78" y="25" width="2.200" height="5" fill="#b4b4c0" opacity=".9"/><rect x="81" y="23" width="2.200" height="7" fill="#b4b4c0" opacity=".9"/><rect x="84" y="23" width="2.200" height="7" fill="#b4b4c0" opacity=".9"/><rect x="0" y="45" width="68" height="7" fill="#b4a648"/><rect x="0" y="52" width="68" height="8" fill="#343040"/><rect x="0" y="66" width="68" height="20" fill="#a4a4b0"/><rect x="0" y="58" width="2.200" height="8" fill="#b0b0bc" opacity=".9"/><rect x="3" y="62" width="2.200" height="4" fill="#b0b0bc" opacity=".9"/><rect x="6" y="58" width="2.200" height="8" fill="#b0b0bc" opacity=".9"/><rect x="9" y="57" width="2.200" height="9" fill="#b0b0bc" opacity=".9"/><rect x="12" y="60" width="2.200" height="6" fill="#b0b0bc" opacity=".9"/><rect x="15" y="61" width="2.200" height="5" fill="#b0b0bc" opacity=".9"/><rect x="18" y="60" width="2.200" height="6" fill="#b0b0bc" opacity=".9"/><rect x="21" y="56" width="2.200" height="10" fill="#b0b0bc" opacity=".9"/><rect x="24" y="59" width="2.200" height="7" fill="#b0b0bc" opacity=".9"/><rect x="27" y="62" width="2.200" height="4" fill="#b0b0bc" opacity=".9"/><rect x="30" y="59" width="2.200" height="7" fill="#b0b0bc" opacity=".9"/><rect x="33" y="63" width="2.200" height="3" fill="#b0b0bc" opacity=".9"/><rect x="36" y="59" width="2.200" height="7" fill="#b0b0bc" opacity=".9"/><rect x="39" y="59" width="2.200" height="7" fill="#b0b0bc" opacity=".9"/><rect x="42" y="60" width="2.200" height="6" fill="#b0b0bc" opacity=".9"/><rect x="45" y="57" width="2.200" height="9" fill="#b0b0bc" opacity=".9"/><rect x="48" y="57" width="2.200" height="9" fill="#b0b0bc" opacity=".9"/><rect x="51" y="59" width="2.200" height="7" fill="#b0b0bc" opacity=".9"/><rect x="54" y="57" width="2.200" height="9" fill="#b0b0bc" opacity=".9"/><rect x="57" y="56" width="2.200" height="10" fill="#b0b0bc" opacity=".9"/><rect x="60" y="61" width="2.200" height="5" fill="#b0b0bc" opacity=".9"/><rect x="63" y="60" width="2.200" height="6" fill="#b0b0bc" opacity=".9"/><rect x="66" y="59" width="2.200" height="7" fill="#b0b0bc" opacity=".9"/><rect x="2.3" y="0" width=".7" height="90" fill="#24222c" opacity=".55"/><rect x="5.3" y="0" width=".7" height="90" fill="#24222c" opacity=".55"/><rect x="8.3" y="0" width=".7" height="90" fill="#24222c" opacity=".55"/><rect x="11.3" y="0" width=".7" height="90" fill="#24222c" opacity=".55"/><rect x="14.3" y="0" width=".7" height="90" fill="#24222c" opacity=".55"/><rect x="17.3" y="0" width=".7" height="90" fill="#24222c" opacity=".55"/><rect x="20.3" y="0" width=".7" height="90" fill="#24222c" opacity=".55"/><rect x="23.3" y="0" width=".7" height="90" fill="#24222c" opacity=".55"/><rect x="26.3" y="0" width=".7" height="90" fill="#24222c" opacity=".55"/><rect x="29.3" y="0" width=".7" height="90" fill="#24222c" opacity=".55"/><rect x="32.3" y="0" width=".7" height="90" fill="#24222c" opacity=".55"/><rect x="35.3" y="0" width=".7" height="90" fill="#24222c" opacity=".55"/><rect x="38.3" y="0" width=".7" height="90" fill="#24222c" opacity=".55"/><rect x="41.3" y="0" width=".7" height="90" fill="#24222c" opacity=".55"/><rect x="44.3" y="0" width=".7" height="90" fill="#24222c" opacity=".55"/><rect x="47.3" y="0" width=".7" height="90" fill="#24222c" opacity=".55"/><rect x="50.3" y="0" width=".7" height="90" fill="#24222c" opacity=".55"/><rect x="53.3" y="0" width=".7" height="90" fill="#24222c" opacity=".55"/><rect x="56.3" y="0" width=".7" height="90" fill="#24222c" opacity=".55"/><rect x="59.3" y="0" width=".7" height="90" fill="#24222c" opacity=".55"/><rect x="62.3" y="0" width=".7" height="90" fill="#24222c" opacity=".55"/><rect x="65.3" y="0" width=".7" height="90" fill="#24222c" opacity=".55"/><rect x="68.3" y="0" width=".7" height="90" fill="#24222c" opacity=".55"/><rect x="71.3" y="0" width=".7" height="90" fill="#24222c" opacity=".55"/><rect x="74.3" y="0" width=".7" height="90" fill="#24222c" opacity=".55"/><rect x="77.3" y="0" width=".7" height="90" fill="#24222c" opacity=".55"/><rect x="80.3" y="0" width=".7" height="90" fill="#24222c" opacity=".55"/><rect x="83.3" y="0" width=".7" height="90" fill="#24222c" opacity=".55"/><rect x="86.3" y="0" width=".7" height="90" fill="#24222c" opacity=".55"/><rect x="0" y="86" width="68" height="4" fill="#2a2630"/><rect x="66" y="47" width="21" height="43" fill="#a8947e"/></svg></div>
<div class="t lbl" style="left:113px;top:391px;">dylan-dog-n201-29<br>0.jpg</div>
<div class="th" style="left:236px;top:296px;width:88px;height:90px"><svg width="88" height="90" viewBox="0 0 88 90" preserveAspectRatio="none" ><rect width="88" height="90" fill="#fff"/><circle cx="44" cy="44" r="40" fill="#fff" stroke="#2a2c3a" stroke-width="2.5"/><circle cx="44" cy="44" r="36.5" fill="none" stroke="#2a2c3a" stroke-width=".8"/><path d="M44 20L49.5 37H67L53 47.5L58.5 65L44 54.5L29.5 65L35 47.5L21 37H38.5Z" fill="#2a2c42"/><path id="cvt" d="M14 44A30 30 0 0 1 74 44" fill="none"/><text font-family="Liberation Serif,serif" font-weight="bold" font-size="11" fill="#b8323e" letter-spacing=".5"><textPath href="#cvt" startOffset="8%">CONVERSE</textPath></text><path id="cvb" d="M11 46A33 33 0 0 0 77 46" fill="none"/><text font-family="Liberation Serif,serif" font-weight="bold" font-size="11" fill="#b8323e" letter-spacing=".6"><textPath href="#cvb" startOffset="14%">ALL STAR</textPath></text><text x="10" y="50" font-family="Liberation Serif,serif" font-style="italic" font-weight="bold" font-size="7" fill="#222">Chuck</text><text x="57" y="50" font-family="Liberation Serif,serif" font-style="italic" font-weight="bold" font-size="7" fill="#222">Taylor</text></svg></div>
<div class="t lbl" style="left:224px;top:391px;">Imagem-LogoAllSta<br>rCONVERSE-byAL..<br>.jpg</div>
<div style="left:340px;top:292px;width:105px;height:127px;background:#0a246a"></div>
<div class="th" style="left:346px;top:341px;width:90px;height:45px"><svg width="90" height="45" viewBox="0 0 90 45" preserveAspectRatio="none" ><rect width="90" height="45" fill="#9c9c9c"/><rect y="0" width="90" height="18" fill="#a2a2a2"/><rect y="28" width="90" height="17" fill="#979797"/><rect x="3" y="6" width="12" height="8" fill="#a9a9a9"/><rect x="68" y="4" width="4" height="12" fill="#8a8a8a"/><rect x="64" y="8" width="4" height="5" fill="#8e8e8e"/></svg></div>
<div class="t lbl" style="left:335px;top:391px;color:#fff;">legno sendra<br>BUMP.jpg</div>
<div class="th" style="left:457px;top:341px;width:90px;height:45px"><svg width="90" height="45" viewBox="0 0 90 45" preserveAspectRatio="none" ><rect width="90" height="45" fill="#000"/><rect x="3" y="6" width="12" height="8" fill="#fff"/></svg></div>
<div class="t lbl" style="left:446px;top:391px;">legno sendra<br>SPECULAR.jpg</div>
<div class="th" style="left:568px;top:341px;width:90px;height:45px"><svg width="90" height="45" viewBox="0 0 90 45" preserveAspectRatio="none" ><rect width="90" height="45" fill="#b09a74"/><rect y="0" width="90" height="14" fill="#b8a27c"/><rect y="30" width="90" height="15" fill="#a89068"/><rect x="3" y="6" width="12" height="8" fill="#b4b4b4"/><rect x="68" y="4" width="4" height="12" fill="#8a7452"/><rect x="64" y="8" width="4" height="5" fill="#8a7452"/></svg></div>
<div class="t lbl" style="left:557px;top:391px;">legno sendra.jpg</div>
<div class="th" style="left:690px;top:296px;width:68px;height:90px"><svg width="68" height="90" viewBox="0 0 68 90" preserveAspectRatio="none" ><rect width="68" height="90" fill="#d8d6d2"/><rect x="0" y="0" width="20" height="16" fill="#efeeea"/><path d="M2 4Q8 0 16 5Q10 10 3 9Z" fill="#8a7a68"/><rect x="20" y="0" width="48" height="16" fill="#0c0c0c"/><text x="30" y="11" font-family="Liberation Sans,sans-serif" font-weight="bold" font-size="11" fill="#555" textLength="30">N.5</text><rect x="0" y="16" width="68" height="6" fill="#e8e8e6"/><rect x="0" y="22" width="40" height="3" fill="#777"/><path d="M0 25H68V60L40 90H0Z" fill="#c9c7c2"/><path d="M5 36L48 24L62 58L18 76Z" fill="#7c7358"/><path d="M8 38L46 27L58 56L20 72Z" fill="#958a68"/><g fill="#3c3828"><path d="M12 41L18 39L20 46L14 48Z"/><path d="M22 38L28 36L30 43L24 45Z"/><path d="M32 35L38 33L40 40L34 42Z"/><path d="M16 52L22 50L24 57L18 59Z"/><path d="M26 49L32 47L34 54L28 56Z"/><path d="M36 46L42 44L44 51L38 53Z"/><path d="M21 63L27 61L28 67L23 69Z"/><path d="M31 60L37 58L39 64L33 66Z"/><path d="M41 57L47 55L49 61L43 63Z"/></g><path d="M68 44V90H28Z" fill="#0e0e0e"/><rect x="38" y="66" width="10" height="9" fill="#b8b6b0"/><rect x="50" y="66" width="12" height="9" fill="#6a6660"/><rect x="38" y="78" width="10" height="9" fill="#8c8a84"/><rect x="50" y="78" width="12" height="9" fill="#4a3a34"/><circle cx="61" cy="22" r="3" fill="#d88" opacity=".7"/></svg></div>
<div class="t lbl" style="left:668px;top:391px;">pagina 1.jpg</div>
<div class="th" style="left:24px;top:437px;width:68px;height:90px"><svg width="68" height="90" viewBox="0 0 68 90" preserveAspectRatio="none" ><rect width="68" height="90" fill="#cfe0ec"/><rect x="0" y="0" width="32" height="80" fill="#c4d8e6"/><rect x="30" y="0" width="10" height="80" fill="#e4eef4"/><rect x="3" y="3.0" width="22" height="2.5" fill="#4c6880" opacity="0.45"/><rect x="3" y="8.6" width="22" height="2.5" fill="#4c6880" opacity="0.45"/><rect x="3" y="14.2" width="22" height="2.5" fill="#4c6880" opacity="0.45"/><rect x="3" y="19.8" width="22" height="2.5" fill="#4c6880" opacity="0.45"/><rect x="3" y="25.4" width="22" height="2.5" fill="#4c6880" opacity="0.45"/><rect x="3" y="31.0" width="22" height="2.5" fill="#4c6880" opacity="0.45"/><rect x="3" y="36.6" width="22" height="2.5" fill="#4c6880" opacity="0.45"/><rect x="3" y="42.2" width="22" height="2.5" fill="#4c6880" opacity="0.45"/><rect x="3" y="47.8" width="22" height="2.5" fill="#4c6880" opacity="0.45"/><rect x="3" y="53.4" width="22" height="2.5" fill="#4c6880" opacity="0.45"/><rect x="3" y="59.0" width="22" height="2.5" fill="#4c6880" opacity="0.45"/><rect x="3" y="64.6" width="22" height="2.5" fill="#4c6880" opacity="0.45"/><rect x="40" y="1" width="26" height="17" fill="#5c6450"/><path d="M42 10Q50 5 64 9V15H42Z" fill="#1e2a24"/><rect x="40" y="19" width="26" height="20" fill="#dfe2e6"/><rect x="40" y="40" width="26" height="20" fill="#fff"/><path d="M43 50L50 45H62V55H44Z" fill="#e04a20"/><rect x="40" y="61" width="26" height="19" fill="#141010"/><circle cx="53" cy="71" r="7" fill="#7c6a66"/><rect x="2" y="66" width="16" height="13" fill="#b8865a"/><rect x="20" y="66" width="16" height="13" fill="#e8e6e0"/><rect x="0" y="81" width="68" height="2" fill="#3a6a8a"/><rect x="0" y="83" width="68" height="5" fill="#a8daf0"/></svg></div>
<div class="t lbl" style="left:2px;top:532px;">pagina 2.jpg</div>
<div class="th" style="left:135px;top:437px;width:68px;height:90px"><svg width="68" height="90" viewBox="0 0 68 90" preserveAspectRatio="none" ><rect width="68" height="90" fill="#fbe3d3"/><rect x="2" y="8.0" width="16" height="1.2" fill="#6a5a50" opacity="0.5"/><rect x="2" y="10.7" width="16" height="1.2" fill="#6a5a50" opacity="0.5"/><rect x="2" y="13.4" width="16" height="1.2" fill="#6a5a50" opacity="0.5"/><rect x="2" y="16.1" width="16" height="1.2" fill="#6a5a50" opacity="0.5"/><rect x="2" y="18.8" width="16" height="1.2" fill="#6a5a50" opacity="0.5"/><rect x="2" y="21.5" width="16" height="1.2" fill="#6a5a50" opacity="0.5"/><rect x="2" y="24.2" width="16" height="1.2" fill="#6a5a50" opacity="0.5"/><rect x="2" y="26.9" width="16" height="1.2" fill="#6a5a50" opacity="0.5"/><rect x="2" y="29.6" width="16" height="1.2" fill="#6a5a50" opacity="0.5"/><rect x="19" y="6" width="12" height="34" fill="#6a6458"/><path d="M21 10L25 6L29 10V38H21Z" fill="#8c8674"/><rect x="23" y="26" width="4" height="12" fill="#2a2620"/><rect x="32" y="5" width="6" height="36" fill="#c8e0ea"/><rect x="40" y="4" width="26" height="10" fill="#fff"/><rect x="38" y="16" width="28" height="6" fill="#6a8a4a"/><rect x="38" y="25" width="28" height="6" fill="#5c8244"/><rect x="38" y="34" width="28" height="6" fill="#7a9a5a"/><rect x="38" y="16" width="28" height="2" fill="#c8dcec"/><rect x="38" y="25" width="28" height="2" fill="#c8dcec"/><rect x="38" y="34" width="28" height="2" fill="#c8dcec"/><rect x="2" y="42" width="64" height="7" fill="#6e7e4c"/><rect x="2" y="53.0" width="30" height="1.2" fill="#6a5a50" opacity="0.5"/><rect x="2" y="55.6" width="30" height="1.2" fill="#6a5a50" opacity="0.5"/><rect x="2" y="58.2" width="30" height="1.2" fill="#6a5a50" opacity="0.5"/><rect x="2" y="60.8" width="30" height="1.2" fill="#6a5a50" opacity="0.5"/><rect x="2" y="63.4" width="30" height="1.2" fill="#6a5a50" opacity="0.5"/><rect x="2" y="66.0" width="30" height="1.2" fill="#6a5a50" opacity="0.5"/><rect x="2" y="68.6" width="30" height="1.2" fill="#6a5a50" opacity="0.5"/><rect x="2" y="71.2" width="30" height="1.2" fill="#6a5a50" opacity="0.5"/><rect x="2" y="73.8" width="30" height="1.2" fill="#6a5a50" opacity="0.5"/><rect x="2" y="76.4" width="30" height="1.2" fill="#6a5a50" opacity="0.5"/><rect x="34" y="53.0" width="32" height="1.2" fill="#6a5a50" opacity="0.5"/><rect x="34" y="55.6" width="32" height="1.2" fill="#6a5a50" opacity="0.5"/><rect x="34" y="58.2" width="32" height="1.2" fill="#6a5a50" opacity="0.5"/><rect x="33" y="58" width="33" height="30" fill="#5c5c5e"/><rect x="60" y="60" width="6" height="26" fill="#c85a5a" opacity=".6"/><rect x="34" y="59" width="5" height="28" fill="#7c7c80"/></svg></div>
<div class="t lbl" style="left:113px;top:532px;">pagina 3.jpg</div>
<div class="th" style="left:246px;top:437px;width:68px;height:90px"><svg width="68" height="90" viewBox="0 0 68 90" preserveAspectRatio="none" ><rect width="68" height="90" fill="#fbe3d3"/><rect x="2" y="7.0" width="14" height="1.2" fill="#6a5a50" opacity="0.5"/><rect x="2" y="9.6" width="14" height="1.2" fill="#6a5a50" opacity="0.5"/><rect x="2" y="12.2" width="14" height="1.2" fill="#6a5a50" opacity="0.5"/><rect x="2" y="14.8" width="14" height="1.2" fill="#6a5a50" opacity="0.5"/><rect x="2" y="17.4" width="14" height="1.2" fill="#6a5a50" opacity="0.5"/><rect x="2" y="20.0" width="14" height="1.2" fill="#6a5a50" opacity="0.5"/><rect x="2" y="22.6" width="14" height="1.2" fill="#6a5a50" opacity="0.5"/><rect x="2" y="25.2" width="14" height="1.2" fill="#6a5a50" opacity="0.5"/><rect x="18" y="6" width="48" height="32" fill="#4a86c0"/><rect x="20" y="9" width="44" height="4" fill="#8ac08a"/><rect x="20" y="15" width="44" height="4" fill="#c8784a"/><rect x="20" y="21" width="44" height="10" fill="#5a92c8"/><rect x="20" y="32" width="44" height="4" fill="#9ac88a"/><rect x="2" y="45.0" width="14" height="1.2" fill="#6a5a50" opacity="0.5"/><rect x="2" y="47.6" width="14" height="1.2" fill="#6a5a50" opacity="0.5"/><rect x="2" y="50.2" width="14" height="1.2" fill="#6a5a50" opacity="0.5"/><rect x="2" y="52.8" width="14" height="1.2" fill="#6a5a50" opacity="0.5"/><rect x="2" y="55.4" width="14" height="1.2" fill="#6a5a50" opacity="0.5"/><rect x="2" y="58.0" width="14" height="1.2" fill="#6a5a50" opacity="0.5"/><rect x="2" y="60.6" width="14" height="1.2" fill="#6a5a50" opacity="0.5"/><rect x="2" y="63.2" width="14" height="1.2" fill="#6a5a50" opacity="0.5"/><rect x="2" y="65.8" width="14" height="1.2" fill="#6a5a50" opacity="0.5"/><rect x="2" y="68.4" width="14" height="1.2" fill="#6a5a50" opacity="0.5"/><rect x="18" y="43" width="48" height="16" fill="#1a1e24"/><path d="M28 52Q40 44 56 50L50 56H30Z" fill="#8a9098"/><rect x="56" y="46" width="8" height="8" fill="#3a9a3a"/><rect x="18" y="59" width="22" height="12" fill="#e8ecf0"/><rect x="30" y="62" width="30" height="10" fill="#dfe3e8"/><rect x="2" y="72" width="16" height="17" fill="#1c3c6a"/><rect x="18" y="73" width="48" height="16" fill="#5a6a8a"/><g fill="#2a3450"><rect x="20" y="74" width="8" height="6"/><rect x="30" y="74" width="8" height="6"/><rect x="40" y="74" width="8" height="6"/><rect x="50" y="74" width="8" height="6"/><rect x="20" y="82" width="8" height="6"/><rect x="30" y="82" width="8" height="6"/><rect x="40" y="82" width="8" height="6"/><rect x="50" y="82" width="8" height="6"/></g></svg></div>
<div class="t lbl" style="left:224px;top:532px;">pagina 4.jpg</div>
<div class="th" style="left:357px;top:437px;width:68px;height:90px"><svg width="68" height="90" viewBox="0 0 68 90" preserveAspectRatio="none" ><rect width="68" height="90" fill="#d9ecf6"/><rect x="22" y="3" width="24" height="2" fill="#6a8aa0"/><rect x="12" y="7" width="44" height="1.4" fill="#8aa0b0"/><rect x="2" y="13.0" width="20" height="1.2" fill="#56666e" opacity="0.5"/><rect x="2" y="15.7" width="20" height="1.2" fill="#56666e" opacity="0.5"/><rect x="2" y="18.4" width="20" height="1.2" fill="#56666e" opacity="0.5"/><rect x="2" y="21.1" width="20" height="1.2" fill="#56666e" opacity="0.5"/><rect x="2" y="23.8" width="20" height="1.2" fill="#56666e" opacity="0.5"/><rect x="2" y="26.5" width="20" height="1.2" fill="#56666e" opacity="0.5"/><rect x="2" y="29.2" width="20" height="1.2" fill="#56666e" opacity="0.5"/><rect x="2" y="31.9" width="20" height="1.2" fill="#56666e" opacity="0.5"/><rect x="2" y="34.6" width="20" height="1.2" fill="#56666e" opacity="0.5"/><rect x="2" y="37.3" width="20" height="1.2" fill="#56666e" opacity="0.5"/><rect x="2" y="40.0" width="20" height="1.2" fill="#56666e" opacity="0.5"/><rect x="2" y="42.7" width="20" height="1.2" fill="#56666e" opacity="0.5"/><rect x="2" y="45.4" width="20" height="1.2" fill="#56666e" opacity="0.5"/><rect x="2" y="48.1" width="20" height="1.2" fill="#56666e" opacity="0.5"/><rect x="2" y="50.8" width="20" height="1.2" fill="#56666e" opacity="0.5"/><rect x="2" y="53.5" width="20" height="1.2" fill="#56666e" opacity="0.5"/><rect x="2" y="56.2" width="20" height="1.2" fill="#56666e" opacity="0.5"/><rect x="2" y="58.9" width="20" height="1.2" fill="#56666e" opacity="0.5"/><rect x="2" y="61.6" width="20" height="1.2" fill="#56666e" opacity="0.5"/><rect x="2" y="64.3" width="20" height="1.2" fill="#56666e" opacity="0.5"/><rect x="2" y="67.0" width="20" height="1.2" fill="#56666e" opacity="0.5"/><rect x="24" y="14" width="38" height="22" fill="#e8e0d4"/><rect x="26" y="16" width="30" height="8" fill="#c8b8a0"/><rect x="30" y="22" width="30" height="12" fill="#f0ece4"/><rect x="34" y="26" width="24" height="4" fill="#c89a6a"/><rect x="24" y="38" width="14" height="10" fill="#1a1a1a"/><rect x="38" y="42" width="12" height="10" fill="#fff"/><rect x="50" y="38" width="14" height="14" fill="#e0d8cc"/><rect x="46" y="56.0" width="20" height="1.2" fill="#56666e" opacity="0.5"/><rect x="46" y="58.7" width="20" height="1.2" fill="#56666e" opacity="0.5"/><rect x="46" y="61.4" width="20" height="1.2" fill="#56666e" opacity="0.5"/><rect x="46" y="64.1" width="20" height="1.2" fill="#56666e" opacity="0.5"/><rect x="46" y="66.8" width="20" height="1.2" fill="#56666e" opacity="0.5"/><rect x="46" y="69.5" width="20" height="1.2" fill="#56666e" opacity="0.5"/><rect x="46" y="72.2" width="20" height="1.2" fill="#56666e" opacity="0.5"/><rect x="46" y="74.9" width="20" height="1.2" fill="#56666e" opacity="0.5"/><rect x="46" y="77.6" width="20" height="1.2" fill="#56666e" opacity="0.5"/><rect x="46" y="80.3" width="20" height="1.2" fill="#56666e" opacity="0.5"/><rect x="46" y="83.0" width="20" height="1.2" fill="#56666e" opacity="0.5"/><rect x="46" y="85.7" width="20" height="1.2" fill="#56666e" opacity="0.5"/><rect x="2" y="70" width="24" height="10" fill="#c8c8c0"/><rect x="4" y="72" width="20" height="5" fill="#5a7a4a"/><rect x="28" y="66" width="18" height="14" fill="#1c48c0"/><rect x="28" y="76" width="18" height="6" fill="#e8d8a0"/><rect x="2" y="82" width="24" height="7" fill="#404850"/></svg></div>
<div class="t lbl" style="left:335px;top:532px;">pagina 5.jpg</div>
<div class="th" style="left:468px;top:437px;width:68px;height:90px"><svg width="68" height="90" viewBox="0 0 68 90" preserveAspectRatio="none" ><rect width="68" height="90" fill="#d9ecf6"/><rect x="2" y="3" width="14" height="9" fill="#5a6aa0"/><rect x="2" y="14" width="14" height="8" fill="#2a2a2a"/><rect x="18" y="2" width="14" height="12" fill="#e85a8a"/><rect x="20" y="4" width="10" height="6" fill="#f0c840"/><rect x="18" y="15" width="14" height="8" fill="#c8b8a8"/><rect x="34" y="3" width="12" height="10" fill="#d8d0c4"/><rect x="48" y="2.0" width="18" height="1.2" fill="#56666e" opacity="0.5"/><rect x="48" y="4.6" width="18" height="1.2" fill="#56666e" opacity="0.5"/><rect x="48" y="7.2" width="18" height="1.2" fill="#56666e" opacity="0.5"/><rect x="48" y="9.8" width="18" height="1.2" fill="#56666e" opacity="0.5"/><rect x="48" y="12.4" width="18" height="1.2" fill="#56666e" opacity="0.5"/><rect x="48" y="15.0" width="18" height="1.2" fill="#56666e" opacity="0.5"/><rect x="48" y="17.6" width="18" height="1.2" fill="#56666e" opacity="0.5"/><rect x="48" y="20.2" width="18" height="1.2" fill="#56666e" opacity="0.5"/><rect x="48" y="22.8" width="18" height="1.2" fill="#56666e" opacity="0.5"/><rect x="48" y="25.4" width="18" height="1.2" fill="#56666e" opacity="0.5"/><rect x="2" y="26.0" width="20" height="1.2" fill="#56666e" opacity="0.5"/><rect x="2" y="28.6" width="20" height="1.2" fill="#56666e" opacity="0.5"/><rect x="2" y="31.2" width="20" height="1.2" fill="#56666e" opacity="0.5"/><rect x="2" y="33.8" width="20" height="1.2" fill="#56666e" opacity="0.5"/><rect x="2" y="36.4" width="20" height="1.2" fill="#56666e" opacity="0.5"/><rect x="2" y="39.0" width="20" height="1.2" fill="#56666e" opacity="0.5"/><rect x="2" y="41.6" width="20" height="1.2" fill="#56666e" opacity="0.5"/><rect x="2" y="44.2" width="20" height="1.2" fill="#56666e" opacity="0.5"/><rect x="2" y="46.8" width="20" height="1.2" fill="#56666e" opacity="0.5"/><rect x="2" y="49.4" width="20" height="1.2" fill="#56666e" opacity="0.5"/><rect x="2" y="52.0" width="20" height="1.2" fill="#56666e" opacity="0.5"/><rect x="2" y="54.6" width="20" height="1.2" fill="#56666e" opacity="0.5"/><rect x="2" y="57.2" width="20" height="1.2" fill="#56666e" opacity="0.5"/><rect x="2" y="59.8" width="20" height="1.2" fill="#56666e" opacity="0.5"/><rect x="2" y="62.4" width="20" height="1.2" fill="#56666e" opacity="0.5"/><rect x="2" y="65.0" width="20" height="1.2" fill="#56666e" opacity="0.5"/><rect x="2" y="67.6" width="20" height="1.2" fill="#56666e" opacity="0.5"/><rect x="2" y="70.2" width="20" height="1.2" fill="#56666e" opacity="0.5"/><rect x="2" y="72.8" width="20" height="1.2" fill="#56666e" opacity="0.5"/><rect x="2" y="75.4" width="20" height="1.2" fill="#56666e" opacity="0.5"/><rect x="2" y="78.0" width="20" height="1.2" fill="#56666e" opacity="0.5"/><rect x="2" y="80.6" width="20" height="1.2" fill="#56666e" opacity="0.5"/><rect x="2" y="83.2" width="20" height="1.2" fill="#56666e" opacity="0.5"/><rect x="2" y="85.8" width="20" height="1.2" fill="#56666e" opacity="0.5"/><rect x="24" y="28.0" width="20" height="1.2" fill="#56666e" opacity="0.5"/><rect x="24" y="30.6" width="20" height="1.2" fill="#56666e" opacity="0.5"/><rect x="24" y="33.2" width="20" height="1.2" fill="#56666e" opacity="0.5"/><rect x="24" y="35.8" width="20" height="1.2" fill="#56666e" opacity="0.5"/><rect x="24" y="38.4" width="20" height="1.2" fill="#56666e" opacity="0.5"/><rect x="24" y="41.0" width="20" height="1.2" fill="#56666e" opacity="0.5"/><rect x="24" y="43.6" width="20" height="1.2" fill="#56666e" opacity="0.5"/><rect x="24" y="46.2" width="20" height="1.2" fill="#56666e" opacity="0.5"/><rect x="24" y="48.8" width="20" height="1.2" fill="#56666e" opacity="0.5"/><rect x="24" y="51.4" width="20" height="1.2" fill="#56666e" opacity="0.5"/><rect x="24" y="54.0" width="20" height="1.2" fill="#56666e" opacity="0.5"/><rect x="24" y="56.6" width="20" height="1.2" fill="#56666e" opacity="0.5"/><rect x="24" y="59.2" width="20" height="1.2" fill="#56666e" opacity="0.5"/><rect x="24" y="61.8" width="20" height="1.2" fill="#56666e" opacity="0.5"/><rect x="24" y="64.4" width="20" height="1.2" fill="#56666e" opacity="0.5"/><rect x="24" y="67.0" width="20" height="1.2" fill="#56666e" opacity="0.5"/><rect x="24" y="69.6" width="20" height="1.2" fill="#56666e" opacity="0.5"/><rect x="24" y="72.2" width="20" height="1.2" fill="#56666e" opacity="0.5"/><rect x="24" y="74.8" width="20" height="1.2" fill="#56666e" opacity="0.5"/><rect x="24" y="77.4" width="20" height="1.2" fill="#56666e" opacity="0.5"/><rect x="24" y="80.0" width="20" height="1.2" fill="#56666e" opacity="0.5"/><rect x="24" y="82.6" width="20" height="1.2" fill="#56666e" opacity="0.5"/><rect x="24" y="85.2" width="20" height="1.2" fill="#56666e" opacity="0.5"/><rect x="50" y="38" width="7" height="10" fill="#f0a020"/><rect x="46" y="30.0" width="18" height="1.2" fill="#56666e" opacity="0.35"/><rect x="46" y="32.6" width="18" height="1.2" fill="#56666e" opacity="0.35"/></svg></div>
<div class="t lbl" style="left:446px;top:532px;">pagina 6.jpg</div>
<div class="th" style="left:579px;top:437px;width:68px;height:90px"><svg width="68" height="90" viewBox="0 0 68 90" preserveAspectRatio="none" ><rect width="68" height="90" fill="#e6e4de"/><rect x="8" y="3" width="52" height="3" fill="#555" opacity=".8"/><rect x="4" y="8" width="60" height="1.5" fill="#888"/><rect x="3" y="12.0" width="28" height="1.2" fill="#777" opacity="0.5"/><rect x="3" y="14.6" width="28" height="1.2" fill="#777" opacity="0.5"/><rect x="3" y="17.2" width="28" height="1.2" fill="#777" opacity="0.5"/><rect x="3" y="19.8" width="28" height="1.2" fill="#777" opacity="0.5"/><rect x="3" y="22.4" width="28" height="1.2" fill="#777" opacity="0.5"/><rect x="3" y="25.0" width="28" height="1.2" fill="#777" opacity="0.5"/><rect x="3" y="27.6" width="28" height="1.2" fill="#777" opacity="0.5"/><rect x="3" y="30.2" width="28" height="1.2" fill="#777" opacity="0.5"/><rect x="3" y="32.8" width="28" height="1.2" fill="#777" opacity="0.5"/><rect x="3" y="35.4" width="28" height="1.2" fill="#777" opacity="0.5"/><rect x="3" y="38.0" width="28" height="1.2" fill="#777" opacity="0.5"/><rect x="3" y="40.6" width="28" height="1.2" fill="#777" opacity="0.5"/><rect x="35" y="12.0" width="30" height="1.2" fill="#777" opacity="0.5"/><rect x="35" y="14.6" width="30" height="1.2" fill="#777" opacity="0.5"/><rect x="35" y="17.2" width="30" height="1.2" fill="#777" opacity="0.5"/><rect x="35" y="19.8" width="30" height="1.2" fill="#777" opacity="0.5"/><rect x="35" y="22.4" width="30" height="1.2" fill="#777" opacity="0.5"/><rect x="35" y="25.0" width="30" height="1.2" fill="#777" opacity="0.5"/><rect x="35" y="27.6" width="30" height="1.2" fill="#777" opacity="0.5"/><rect x="35" y="30.2" width="30" height="1.2" fill="#777" opacity="0.5"/><rect x="35" y="32.8" width="30" height="1.2" fill="#777" opacity="0.5"/><rect x="35" y="35.4" width="30" height="1.2" fill="#777" opacity="0.5"/><rect x="35" y="38.0" width="30" height="1.2" fill="#777" opacity="0.5"/><rect x="35" y="40.6" width="30" height="1.2" fill="#777" opacity="0.5"/><rect x="6" y="44" width="56" height="44" fill="#8a7a50"/><rect x="8" y="46" width="52" height="42" fill="#a09060"/><g fill="#2e2a1c"><rect x="12" y="48" width="6" height="10"/><rect x="22" y="48" width="6" height="10"/><rect x="34" y="48" width="8" height="10"/><rect x="48" y="48" width="8" height="10"/><rect x="12" y="62" width="6" height="10"/><rect x="22" y="62" width="6" height="10"/><rect x="34" y="62" width="8" height="10"/><rect x="48" y="62" width="8" height="10"/><rect x="12" y="76" width="6" height="10"/><rect x="34" y="76" width="8" height="10"/><rect x="48" y="76" width="8" height="10"/></g><rect x="29" y="46" width="3" height="42" fill="#5a4a30"/></svg></div>
<div class="t lbl" style="left:557px;top:532px;">pagina 7.jpg</div>
<div class="th" style="left:679px;top:437px;width:90px;height:90px"><svg width="90" height="90" viewBox="0 0 90 90" preserveAspectRatio="none" ><defs><linearGradient id="rbg" x1="0" y1="0" x2="0" y2="1"><stop offset="0" stop-color="#fff"/><stop offset="1" stop-color="#cfcfcf"/></linearGradient><linearGradient id="rbs" x1="0" y1="0" x2="0" y2="1"><stop offset="0" stop-color="#fafafa"/><stop offset=".6" stop-color="#d8d8d8"/><stop offset="1" stop-color="#9a9a9a"/></linearGradient></defs><rect width="90" height="90" fill="#fff"/><rect x="0" y="0" width="33" height="38" fill="url(#rbg)"/><rect x="35" y="2" width="55" height="52" fill="url(#rbg)"/><rect x="0" y="40" width="40" height="10" fill="url(#rbs)"/><rect x="0" y="54" width="40" height="10" fill="url(#rbs)"/><rect x="0" y="68" width="40" height="12" fill="url(#rbs)"/><path d="M42 58L82 62V72L42 68Z" fill="url(#rbs)"/><path d="M42 58L82 62" stroke="#555" stroke-width="1"/></svg></div>
<div class="t lbl" style="left:668px;top:532px;">righe BUMP.jpg</div>
<div class="th" style="left:13px;top:552px;width:90px;height:90px"><svg width="90" height="90" viewBox="0 0 90 90" preserveAspectRatio="none" ><rect width="90" height="90" fill="#fff"/><rect x="0" y="0" width="32" height="40" fill="#b4b49e"/><rect x="35" y="0" width="55" height="54" fill="#b4b49e"/><rect x="35" y="4" width="55" height="4" fill="#deded2"/><rect x="0" y="42" width="39" height="13" fill="#b8b8a4"/><rect x="0" y="42" width="39" height="3" fill="#d4d4c6"/><rect x="1" y="57" width="38" height="14" fill="#b0b09a"/><path d="M22 57L25 57L29 71L26 71ZM27 57L30 57L34 71L31 71Z" fill="#e8e8de"/><path d="M41 55L80 58V70L41 67Z" fill="#b8b8a4"/><path d="M41 55L80 58" stroke="#d8d8cc" stroke-width="2"/><path d="M1 74L32 76V89L1 87Z" fill="#b0b09a"/><path d="M8 74L11 74L8 88L5 88ZM13 75L16 75L13 88L10 88Z" fill="#e8e8de"/><path d="M4 62L7 66L10 62L9 68H5Z" fill="#e8e8de"/><path d="M24 80L27 84L30 80L29 87H25Z" fill="#e8e8de"/></svg></div>
<div class="t lbl" style="left:2px;top:647px;">righe.jpg</div>
<div class="th" style="left:124px;top:552px;width:90px;height:90px"><svg width="90" height="90" viewBox="0 0 90 90" preserveAspectRatio="none" ><rect width="90" height="90" fill="#fff"/></svg></div>
<div class="t lbl" style="left:113px;top:647px;">scatolone.jpg</div>
<div class="th" style="left:235px;top:552px;width:90px;height:90px"><svg width="90" height="90" viewBox="0 0 90 90" preserveAspectRatio="none" ><rect width="90" height="90" fill="#fff"/><circle cx="45" cy="45" r="6.5" fill="#000"/></svg></div>
<div class="t lbl" style="left:224px;top:647px;">u2 alpha.jpg</div>
<div class="th" style="left:346px;top:552px;width:90px;height:90px"><svg width="90" height="90" viewBox="0 0 90 90" preserveAspectRatio="none" ><rect width="90" height="90" fill="#fff"/><circle cx="45" cy="45" r="43.5" fill="#d62228" stroke="#b8b8b8" stroke-width="1.5"/><circle cx="45" cy="45" r="34" fill="#0c0c0c"/><circle cx="45" cy="45" r="25" fill="#d62228"/><circle cx="45" cy="45" r="17" fill="#0c0c0c"/><circle cx="45" cy="45" r="8" fill="#d8d8d8"/><circle cx="45" cy="45" r="5.5" fill="#fff"/></svg></div>
<div class="t lbl" style="left:335px;top:647px;">U2.jpg</div>
<div class="th" style="left:457px;top:552px;width:90px;height:90px"><svg width="90" height="90" viewBox="0 0 90 90" preserveAspectRatio="none" ><rect width="90" height="90" fill="#000"/><g fill="#333"><circle cx="26" cy="70" r="1"/><circle cx="24" cy="74" r="1"/><circle cx="20" cy="77" r="1"/><circle cx="15" cy="79" r="1"/><circle cx="10" cy="80" r="1"/><circle cx="22" cy="85" r="1"/><circle cx="26" cy="85" r="1"/><circle cx="64" cy="70" r="1"/><circle cx="67" cy="74" r="1"/><circle cx="71" cy="78" r="1"/><circle cx="76" cy="80" r="1"/><circle cx="82" cy="81" r="1"/><circle cx="64" cy="85" r="1"/><circle cx="68" cy="85" r="1"/></g></svg></div>
<div class="t lbl" style="left:446px;top:647px;">UV 4 BUMP<br>ALPHA.jpg</div>
<div class="th" style="left:568px;top:552px;width:90px;height:90px"><svg width="90" height="90" viewBox="0 0 90 90" preserveAspectRatio="none" ><rect width="90" height="90" fill="#000"/><path d="M0 0H53V33.500H37V36.300H0Z" fill="#848484"/><path d="M3 4Q5 2 12 3L13.500 11Q8 14 3 11Z" fill="#6c6c6c"/><path d="M5 5L11 10M11 5L5 10" stroke="#555" stroke-width="1"/><path d="M19 11Q25 2 40 2Q50 3 50 8Q48 14 36 16Q25 17 19 11Z" fill="#5e5e5e"/><path d="M21 11L30 5.500L37 9.500L28 14.500Z" fill="#2c2c2c"/><path d="M32 6L46 5L47 10L38 13Z" fill="#6e6e6e"/><path d="M7 50.700L24.600 53.500V52H35V53L70 52V56.200L35 57.300V58.200H24.600V57L7 54.800Z" fill="#a6a6a6"/><path d="M0 79L6 77.500L19 74.500L26 64.500L38 66L49 68L60 65.500L67.500 63.500L73 77" fill="none" stroke="#b2b2b2" stroke-width="4" stroke-linejoin="round"/><path d="M71 76L84.200 72.600L90 83V88L82 80L73 81Z" fill="#b2b2b2"/><rect x="47.300" y="67" width="3.700" height="20" fill="#c6c6c6"/><circle cx="34.700" cy="75.300" r="3.800" fill="#8a8a8a"/><g fill="#9a9a9a"><circle cx="27.500" cy="69" r=".9"/><circle cx="25.500" cy="73" r=".9"/><circle cx="22" cy="76.500" r=".9"/><circle cx="17" cy="79" r=".9"/><circle cx="11" cy="81" r=".9"/><circle cx="6" cy="82" r=".9"/><circle cx="63.500" cy="68" r=".9"/><circle cx="65.500" cy="72.500" r=".9"/><circle cx="68" cy="77" r=".9"/><circle cx="72" cy="81" r=".9"/><circle cx="77" cy="83" r=".9"/><circle cx="82" cy="85" r=".9"/><circle cx="23" cy="86" r=".9"/><circle cx="26.500" cy="86" r=".9"/><circle cx="64" cy="86" r=".9"/><circle cx="67.500" cy="86" r=".9"/></g></svg></div>
<div class="t lbl" style="left:557px;top:647px;">UV 4 BUMP.jpg</div>
<div class="th" style="left:679px;top:552px;width:90px;height:90px"><svg width="90" height="90" viewBox="0 0 90 90" preserveAspectRatio="none" ><rect width="90" height="90" fill="#000"/><path d="M0 0H53.500V36.300H0Z" fill="#878787"/><rect x="3" y="5" width="40" height="9" fill="#7f7f7f"/><path d="M72 3Q80 0 87 4Q90 12 86 19Q82 24 79 21Q76 15 73 12Q70 7 72 3Z" fill="#cfd2d6"/><path d="M41 36.500L71.500 35V50L41.500 49.500Z" fill="#dcdcdc"/><path d="M44.500 39.500L58 41L68.500 38.800V47.200L58 45.500L44.500 47.500Z" fill="#000"/><path d="M7 50.700L24.600 53.500V52H35V53L70 52V56.200L35 57.300V58.200H24.600V57L7 54.800Z" fill="#bebebe"/><path d="M0 79L6 77.500L19 74.500L26 64.500L38 66L49 67L60 65.500L67.500 63.500L73 77" fill="none" stroke="#dadada" stroke-width="4" stroke-linejoin="round"/><path d="M71 76L84.200 72.600L90 83V88L82 80L73 81Z" fill="#dadada"/><circle cx="34.700" cy="75.300" r="4" fill="#d8d8d8"/><circle cx="34.700" cy="75.300" r="1.600" fill="#7a4a4a"/><g fill="#9a9a9a"><circle cx="27.500" cy="69" r=".9"/><circle cx="25.500" cy="73" r=".9"/><circle cx="22" cy="76.500" r=".9"/><circle cx="17" cy="79" r=".9"/><circle cx="11" cy="81" r=".9"/><circle cx="6" cy="82" r=".9"/><circle cx="63.500" cy="68" r=".9"/><circle cx="65.500" cy="72.500" r=".9"/><circle cx="68" cy="77" r=".9"/><circle cx="72" cy="81" r=".9"/><circle cx="77" cy="83" r=".9"/><circle cx="82" cy="85" r=".9"/><circle cx="23" cy="86" r=".9"/><circle cx="26.500" cy="86" r=".9"/><circle cx="64" cy="86" r=".9"/><circle cx="67.500" cy="86" r=".9"/></g></svg></div>
<div class="t lbl" style="left:668px;top:647px;">UV 4.tif</div>
<div class="th" style="left:124px;top:687px;width:90px;height:30px;background:#fff"></div>
<div class="th" style="left:237px;top:680px;width:87px;height:30px;background:#fff"></div>
<div class="th" style="left:458px;top:173px;width:90px;height:84px;background:linear-gradient(180deg,#5a6a9a,#3a2a28 20%,#2a2020 80%,#4a5a8a)"></div>
</div>
<div style="left:791px;top:88px;width:17px;height:702px;background:repeating-conic-gradient(#fff 0 25%,#d4d0c8 0 50%) 0 0/2px 2px"></div>
<div class="btn" style="left:791px;top:88px;width:17px;height:17px"><svg style="left:4px;top:5px" width="7" height="4" viewBox="0 0 7 4"><path d="M0 4L3.5 0L7 4Z" fill="#000"/></svg></div>
<div class="btn" style="left:791px;top:278px;width:17px;height:518px"></div>
</div>
<!-- IrfanView inactive -->
<div id="irf2" class="win" style="left:656px;top:14px;width:629px;height:572px">
<div class="tb ina" style="left:4px;top:4px;width:621px"></div>
<div style="left:6px;top:5px;width:16px;height:16px"><svg width="16" height="16" viewBox="0 0 32 34" preserveAspectRatio="none"><rect width="32" height="34" fill="#fff"/><path d="M2 4L6 3L8 6L11 5L12 2L15 3L14 8L17 10L22 6L24 2L28 3L28 7L25 10L22 14L26 15L31 14L32 18L30 20L26 19L24 22L27 26L31 27L32 30L30 32L27 31L27 34H22L21 30L18 26L14 28L13 32L10 34L7 33L8 29L10 25L8 21L3 22L1 20L1 17L6 15L8 12L6 9L2 8Z" fill="#f00808"/><path d="M3 4L10 9L12 5L8 4Z" fill="#300"/><path d="M20 3L22 5M27 10L30 9M4 26L6 28M26 24L29 22" stroke="#e8a0a0" stroke-width="1.500"/></svg></div>
<div class="t" style="left:24px;top:7px;font-weight:bold;font-size:11px;color:#d4d0c8;transform:scaleX(1.088);transform-origin:0 0">legno sendra.jpg - IrfanView (Zoom: 616 x 310)</div>
<div class="btn" style="left:607px;top:6px;width:16px;height:14px"><svg style="left:3px;top:2px" width="8" height="8" viewBox="0 0 8 8"><path d="M0.5 0.5L7.5 7.5M7.5 0.5L0.5 7.5" stroke="#000" stroke-width="1.6"/></svg></div>
<div class="btn" style="left:589px;top:6px;width:16px;height:14px"><div style="left:2px;top:1px;width:10px;height:9px;border:1px solid #000;border-top-width:2px"></div></div>
<div class="btn" style="left:573px;top:6px;width:16px;height:14px"><div style="left:3px;top:8px;width:6px;height:2px;background:#000"></div></div>
<div class="t" style="left:9.6px;top:26px;color:#808080;font-size:10px">File</div>
<div class="t" style="left:37.6px;top:26px;color:#808080;font-size:10.6px">Edit</div>
<div class="t" style="left:67.8px;top:26px;color:#808080;font-size:10.6px">Image</div>
<div class="t" style="left:109.8px;top:26px;color:#808080;font-size:10.6px">Options</div>
<div class="t" style="left:158.4px;top:26px;color:#808080;font-size:10.2px">View</div>
<div class="t" style="left:192.4px;top:26px;color:#808080;font-size:10.4px">Help</div>
<div style="left:4px;top:42px;width:621px;height:2px;border-top:1px solid #808080;border-bottom:1px solid #fff"></div>
<div style="left:7px;top:48px;width:24px;height:24px"><svg width="24" height="24" viewBox="0 0 24 24"><path d="M1.5 21V7.5Q1.5 6 3 6H8L10 8.5H17Q18.5 8.5 18.5 10V12" fill="#f3d35a" stroke="#8a6d14" stroke-width="1"/><path d="M1.5 21L5.5 12.5H23L18.5 21Z" fill="#f7dc4e" stroke="#8a6d14" stroke-width="1"/><path d="M5.5 13.5H21.5L18 20.5H2.5Z" fill="#e9bf2a" opacity=".55"/><path d="M13 6Q17 2 21 5.5" fill="none" stroke="#111" stroke-width="1.6"/><path d="M22.5 8.5L17.8 7.2L21.8 3.2Z" fill="#111"/></svg></div>
<div style="left:38px;top:48px;width:24px;height:24px"><svg width="24" height="24" viewBox="0 0 24 24"><rect x="0.5" y="2" width="23" height="20" fill="#1d3fae"/><rect x="1" y="5.5" width="22" height="13" fill="#f7ecc0"/><rect x="4.5" y="6" width="15" height="6" fill="#9fd4ee"/><circle cx="15.5" cy="9" r="1.8" fill="#f5e35a"/><path d="M4.5 18V12Q8 9.5 11 12T19.5 11.5V18Z" fill="#e39a22"/><path d="M4.5 18V15Q9 12.5 13 15T19.5 14.5V18Z" fill="#f0b948"/><rect x="1" y="5.5" width="3" height="13" fill="#e9a63a"/><rect x="20" y="5.5" width="3" height="13" fill="#e9a63a"/><path d="M2 3.5H22M2 20.5H22" stroke="#dfe6ff" stroke-width="1.2" stroke-dasharray="1.2 1.6"/></svg></div>
<div style="left:69px;top:48px;width:24px;height:24px"><svg width="24" height="24" viewBox="0 0 24 24"><path d="M1.5 1.5H20L22.5 4V22.5H1.5Z" fill="#2a62c9" stroke="#123a8c"/><rect x="5" y="1.5" width="14" height="11.5" fill="#fff"/><path d="M5 3H19M5 6.6H19M5 10.2H19" stroke="#c5232b" stroke-width="2"/><rect x="6.5" y="16" width="11" height="6.5" fill="#d9dde6"/><rect x="8" y="17" width="3.2" height="5.5" fill="#111"/><rect x="11.2" y="18.5" width="2.5" height="4" fill="#fff"/></svg></div>
<div style="left:100px;top:48px;width:24px;height:24px"><svg width="24" height="24" viewBox="0 0 24 24"><path d="M3 3.5Q8 7 12 11.5Q15.5 6.5 20.5 2.5L22 4.5Q17 9 14.5 13.5Q18 17.5 21.5 21L18.8 22.5Q15.5 18.5 12.3 15.5Q9 19.5 5.5 23L2.8 21.5Q6.5 17 9.8 13Q6 8.5 1.8 5.5Z" fill="#d62a2a" stroke="#981616" stroke-width=".8"/></svg></div>
<div style="left:131px;top:46px;width:2px;height:28px;border-left:1px solid #808080;border-right:1px solid #fff"></div>
<div style="left:139px;top:48px;width:24px;height:24px"><svg width="24" height="24" viewBox="0 0 24 24"><g fill="none" stroke="#9a9a9a" stroke-width="1.5"><path d="M8 2L14.5 16M16 2L9.5 16"/><ellipse cx="7.5" cy="19" rx="2.6" ry="3.2" transform="rotate(25 7.5 19)"/><ellipse cx="16.5" cy="19" rx="2.6" ry="3.2" transform="rotate(-25 16.5 19)"/></g><path d="M8 2L12 11L16 2L12 8Z" fill="#c8c8c8"/></svg></div>
<div style="left:170px;top:48px;width:24px;height:24px"><svg width="24" height="24" viewBox="0 0 24 24"><path d="M2.5 1.5H10L13.5 5V14.5H2.5Z" fill="#fff" stroke="#7a8798"/><path d="M4.5 5.5H9M4.5 8H11M4.5 10.5H11" stroke="#5b6b82"/><path d="M9.5 8.5H17.5L21.5 12.5V22.5H9.5Z" fill="#cfe4fb" stroke="#3f6fb5"/><path d="M12 13.5H18M12 16H19M12 18.5H19" stroke="#2f62b8" stroke-width="1.2"/></svg></div>
<div style="left:201px;top:48px;width:24px;height:24px"><svg width="24" height="24" viewBox="0 0 24 24"><rect x="1.5" y="3.5" width="17" height="19" rx="1" fill="#f1d35c" stroke="#8a6d14"/><rect x="6" y="1.5" width="8" height="4.5" rx="1" fill="#6a6f78" stroke="#33363b"/><rect x="3.5" y="7" width="13" height="13.5" fill="#fbf3c6"/><path d="M10.5 11.5H19L22.5 15V22.5H10.5Z" fill="#cfe4fb" stroke="#3f6fb5"/><path d="M12.5 16H19M12.5 18.5H20" stroke="#2f62b8" stroke-width="1.2"/></svg></div>
<div style="left:232px;top:48px;width:24px;height:24px"><svg width="24" height="24" viewBox="0 0 24 24"><path d="M5 10Q12 2 17.5 7.5Q21 12 14 21.5L11.5 20Q17 12 14.5 9.5Q11.5 7 7.5 12.5Z" fill="#c4c4c4" stroke="#9b9b9b"/><path d="M2.5 6.5L11 13.5L3.5 15.5Z" fill="#c4c4c4" stroke="#9b9b9b"/></svg></div>
<div style="left:263px;top:46px;width:2px;height:28px;border-left:1px solid #808080;border-right:1px solid #fff"></div>
<div style="left:271px;top:48px;width:24px;height:24px"><svg width="24" height="24" viewBox="0 0 24 24"><defs><radialGradient id="ig" cx=".4" cy=".3" r=".8"><stop offset="0" stop-color="#7fb2f5"/><stop offset="1" stop-color="#164fb5"/></radialGradient></defs><circle cx="12" cy="12" r="10.5" fill="#2f6fd8" stroke="#0f3c94"/><circle cx="12" cy="12" r="9.5" fill="none" stroke="#8fbcf5" stroke-width=".8" opacity=".7"/><circle cx="12" cy="6.8" r="1.9" fill="#fff"/><rect x="10.3" y="10" width="3.4" height="8.5" rx=".6" fill="#fff"/></svg></div>
<div style="left:302px;top:48px;width:24px;height:24px"><svg width="24" height="24" viewBox="0 0 24 24"><path d="M15 15L21.5 21.5" stroke="#c99a1e" stroke-width="3.6" stroke-linecap="round"/><path d="M15 15L21.5 21.5" stroke="#f0cf58" stroke-width="1.6" stroke-linecap="round"/><circle cx="10" cy="10" r="8" fill="#dcecfb" stroke="#3568b8" stroke-width="1.8"/><path d="M6 10H14" stroke="#1c4fb0" stroke-width="2.4"/><path d="M10 6V14" stroke="#1c4fb0" stroke-width="2.4"/></svg></div>
<div style="left:333px;top:48px;width:24px;height:24px"><svg width="24" height="24" viewBox="0 0 24 24"><path d="M15 15L21.5 21.5" stroke="#c99a1e" stroke-width="3.6" stroke-linecap="round"/><path d="M15 15L21.5 21.5" stroke="#f0cf58" stroke-width="1.6" stroke-linecap="round"/><circle cx="10" cy="10" r="8" fill="#dcecfb" stroke="#3568b8" stroke-width="1.8"/><path d="M6 10H14" stroke="#1c4fb0" stroke-width="2.4"/></svg></div>
<div style="left:364px;top:48px;width:24px;height:24px"><svg width="24" height="24" viewBox="0 0 24 24"><path d="M1.5 12L11.5 3V8H22.5V16H11.5V21Z" fill="#3d7be0" stroke="#173f98" stroke-linejoin="round"/><path d="M4 12L10.5 6V9.5H21.5" fill="none" stroke="#9cc3fa" stroke-width="1"/></svg></div>
<div style="left:395px;top:48px;width:24px;height:24px"><svg width="24" height="24" viewBox="0 0 24 24"><path d="M22.5 12L12.5 3V8H1.5V16H12.5V21Z" fill="#3d7be0" stroke="#173f98" stroke-linejoin="round"/><path d="M2.5 9.5H13.5V6L20 12" fill="none" stroke="#9cc3fa" stroke-width="1"/></svg></div>
<div style="left:426px;top:48px;width:24px;height:24px"><svg width="24" height="24" viewBox="0 0 24 24"><g fill="#ececec" stroke="#9a9a9a"><rect x="1.5" y="1.5" width="16" height="17" rx="2"/><rect x="3.5" y="3.5" width="16" height="17" rx="2"/><rect x="5.5" y="5.5" width="16" height="17" rx="2"/></g><path d="M12 20V13H9L13.5 7.5L18 13H15V20Z" fill="#a0a0a0" stroke="#8a8a8a" stroke-width=".6"/></svg></div>
<div style="left:457px;top:48px;width:24px;height:24px"><svg width="24" height="24" viewBox="0 0 24 24"><g fill="#ececec" stroke="#9a9a9a"><rect x="1.5" y="1.5" width="16" height="17" rx="2"/><rect x="3.5" y="3.5" width="16" height="17" rx="2"/><rect x="5.5" y="5.5" width="16" height="17" rx="2"/></g><path d="M12 8V15H9L13.5 20.5L18 15H15V8Z" fill="#a0a0a0" stroke="#8a8a8a" stroke-width=".6"/></svg></div>
<div class="sunk2" style="left:486px;top:46px;width:77px;height:26px;background:#fff;text-align:center;font-size:12.5px;line-height:21px">34/52</div>
<div style="left:569px;top:48px;width:24px;height:24px"><svg width="24" height="24" viewBox="0 0 24 24"><path d="M3.5 20.5L17 6" stroke="#2c5aa8" stroke-width="4.4" stroke-linecap="round"/><path d="M3.5 20.500L17 6" stroke="#cfe2fa" stroke-width="2.400" stroke-linecap="round"/><path d="M15 7.500Q13 3 17.500 1L18.200 1.600L16.800 4.800L19.300 6.800L22 4.800L22.800 5.600Q22.500 10.500 17.500 9.500Z" fill="#cfe2fa" stroke="#2c5aa8" stroke-width="1"/><path d="M7 17Q10 21.500 6 23.500L5 22.800L6.300 20L4 18L1.500 20L.8 19.200Q.8 14.500 5 15.200Z" fill="#cfe2fa" stroke="#2c5aa8" stroke-width="1"/><path d="M3 3L11 11.500" stroke="#3c4c78" stroke-width="1.600"/><path d="M1.300 2.800Q1 1 2.800 1.300L6 4.500L4.500 6Z" fill="#9cbcf0" stroke="#2c5aa8" stroke-width=".9"/><path d="M11.500 14.500L14.500 11.500L22.300 19.300Q23 21.500 21.500 22.500Q20 23.300 19 22Z" fill="#e2b82c" stroke="#7a5a10" stroke-width="1"/><path d="M13.500 13.500L21 21" stroke="#f6e27a" stroke-width="1.200"/></svg></div>
<div style="left:601px;top:48px;width:24px;height:24px"><svg width="24" height="24" viewBox="0 0 24 24"><path d="M2.200 5.500Q4 4 6 6.500L8.300 8.300Q8.800 5 10.500 3Q12.500 1.500 13.600 4L14.200 8Q16.500 9.500 17.600 8L17.500 4.500Q18.500 2 20.500 3Q22.200 4.500 21.200 8L20.600 13Q23.300 17 22.300 21Q20.500 24 15 23.500Q12 23 11.500 19.600Q7 21.600 3 20.200Q0.500 18.600 1.500 16.600Q4 14.800 9 15Q7.500 12 6 10.200Q3 8.200 2.200 5.500Z" fill="#e0161c"/><path d="M12 12Q16 10.500 19 13Q21 17 19.500 21Q16 22.500 13.500 20Q12 16 12 12Z" fill="#f43a3a" opacity=".7"/><path d="M3 17Q6 15.800 9 16.500Q6 18.500 3.500 18.500Z" fill="#f65050" opacity=".7"/><path d="M19 4Q20 3.300 20.500 5L20 8.500L18.800 8.500Z" fill="#f65050" opacity=".7"/><path d="M5.200 9.800Q9 6.500 13.400 7.300L13.200 10Q9.500 10.500 7.200 13Q5.500 12 5.200 9.800Z" fill="#16100e"/><ellipse cx="7.600" cy="10.800" rx="1.300" ry=".9" fill="#e8efe8" transform="rotate(-25 7.600 10.800)"/><ellipse cx="10.900" cy="8.900" rx="1.300" ry=".9" fill="#e8efe8" transform="rotate(-20 10.900 8.900)"/></svg></div>
<div style="left:4px;top:78px;width:621px;height:470px;background:#000;border:1px solid;border-color:#808080 #fff #fff #808080;overflow:hidden">
<div style="left:1px;top:79px;width:616px;height:310px;background:#b09a77;overflow:hidden"><div style="left:0;top:0px;width:616px;height:38px;background:rgba(120,90,50,.10)"></div><div style="left:0;top:38px;width:616px;height:26px;background:rgba(255,240,210,.07)"></div><div style="left:0;top:150px;width:616px;height:60px;background:rgba(255,235,200,.06)"></div><div style="left:0;top:262px;width:616px;height:48px;background:rgba(110,80,40,.09)"></div><svg style="left:0;top:0" width="616" height="310"><filter id="wf2" x="0" y="0" width="100%" height="100%"><feTurbulence type="fractalNoise" baseFrequency="0.05 0.45" numOctaves="2" seed="7"/><feColorMatrix type="matrix" values="0 0 0 0 0  0 0 0 0 0  0 0 0 0 0  1.4 0 0 0 -0.42"/></filter><rect width="100%" height="100%" filter="url(#wf2)" opacity="0.07"/></svg><div style="left:0;top:0;width:616px;height:310px;border:1px solid rgba(235,225,205,.55)"></div><div style="left:16px;top:43px;width:84px;height:56px;background:#9c9c9c"></div><div style="left:0;top:133px;width:127px;height:16px;background:rgba(255,255,255,.07)"></div><div style="left:0;top:149px;width:127px;height:1px;background:rgba(255,255,255,.22)"></div><svg style="left:432px;top:29px" width="66" height="82" viewBox="0 0 66 82" fill="none" stroke="rgba(84,62,34,.78)"><rect x="39.500" y="1.500" width="24" height="79" rx="12" stroke-width="2.600"/><path d="M8.500 26Q3 40 8.500 54Q12.500 57.500 16.500 54.500Q20.500 57.500 24.500 54.500Q28.500 57.500 32.500 54Q38 40 32.500 26Q28.500 22.500 24.500 25.500Q20.500 22.500 16.500 25.500Q12.500 22.500 8.500 26Z" stroke-width="2.600"/><text x="20.500" y="51.500" text-anchor="middle" font-family="Liberation Sans,sans-serif" font-weight="bold" font-size="32" fill="rgba(84,62,34,.78)" stroke-width=".5">S</text></svg><div class="t" style="left:472.5px;top:102px;transform:rotate(-90deg);transform-origin:0 0;font-family:'Liberation Serif',serif;font-weight:bold;font-size:16px;line-height:16px;color:rgba(84,62,34,.78);letter-spacing:.2px">SENDRA</div><div class="t" style="left:487px;top:89px;transform:rotate(-90deg);transform-origin:0 0;font-family:'Liberation Sans',sans-serif;font-weight:bold;font-size:5px;line-height:5px;color:rgba(84,62,34,.78);letter-spacing:.2px">HANDMADE</div></div>
</div>
<div class="cell" style="left:4px;top:551px;width:111px;font-size:10.3px">1600 x 804 x 24 BPP</div>
<div class="cell" style="left:118px;top:551px;width:39px;font-size:10.6px">34/52</div>
<div class="cell" style="left:160px;top:551px;width:46px;font-size:10.6px">39 %</div>
<div class="cell" style="left:209px;top:551px;width:109px;font-size:10.5px">380.41 KB / 3.68 MB</div>
<div class="cell" style="left:321px;top:551px;width:124px;font-size:11.3px">02/06/2011 / 15:09:37</div>
<div class="cell" style="left:447px;top:551px;width:177px;font-size:11px"></div>
<svg style="left:611px;top:554px" width="13" height="13" viewBox="0 0 13 13"><path d="M12 1L1 12M12 5L5 12M12 9L9 12" stroke="#808080" stroke-width="1.4"/><path d="M13 1L2 12M13 5L6 12M13 9L10 12" stroke="#fff" stroke-width="1"/></svg>
</div>
<!-- IrfanView active -->
<div id="irf1" class="win" style="left:11px;top:18px;width:631px;height:572px">
<div class="tb act" style="left:4px;top:4px;width:623px"></div>
<div style="left:6px;top:5px;width:16px;height:16px"><svg width="16" height="16" viewBox="0 0 32 34" preserveAspectRatio="none"><rect width="32" height="34" fill="#fff"/><path d="M2 4L6 3L8 6L11 5L12 2L15 3L14 8L17 10L22 6L24 2L28 3L28 7L25 10L22 14L26 15L31 14L32 18L30 20L26 19L24 22L27 26L31 27L32 30L30 32L27 31L27 34H22L21 30L18 26L14 28L13 32L10 34L7 33L8 29L10 25L8 21L3 22L1 20L1 17L6 15L8 12L6 9L2 8Z" fill="#f00808"/><path d="M3 4L10 9L12 5L8 4Z" fill="#300"/><path d="M20 3L22 5M27 10L30 9M4 26L6 28M26 24L29 22" stroke="#e8a0a0" stroke-width="1.500"/></svg></div>
<div class="t" style="left:24px;top:7px;font-weight:bold;font-size:11px;color:#fff;transform:scaleX(1.088);transform-origin:0 0">legno sendra BUMP.jpg - IrfanView (Zoom: 619 x 311)</div>
<div class="btn" style="left:609px;top:6px;width:16px;height:14px"><svg style="left:3px;top:2px" width="8" height="8" viewBox="0 0 8 8"><path d="M0.5 0.5L7.5 7.5M7.5 0.5L0.5 7.5" stroke="#000" stroke-width="1.6"/></svg></div>
<div class="btn" style="left:591px;top:6px;width:16px;height:14px"><div style="left:2px;top:1px;width:10px;height:9px;border:1px solid #000;border-top-width:2px"></div></div>
<div class="btn" style="left:575px;top:6px;width:16px;height:14px"><div style="left:3px;top:8px;width:6px;height:2px;background:#000"></div></div>
<div class="t" style="left:9.6px;top:26px;color:#000;font-size:10px">File</div>
<div class="t" style="left:37.6px;top:26px;color:#000;font-size:10.6px">Edit</div>
<div class="t" style="left:67.8px;top:26px;color:#000;font-size:10.6px">Image</div>
<div class="t" style="left:109.8px;top:26px;color:#000;font-size:10.6px">Options</div>
<div class="t" style="left:158.4px;top:26px;color:#000;font-size:10.2px">View</div>
<div class="t" style="left:192.4px;top:26px;color:#000;font-size:10.4px">Help</div>
<div style="left:4px;top:42px;width:623px;height:2px;border-top:1px solid #808080;border-bottom:1px solid #fff"></div>
<div style="left:7px;top:48px;width:24px;height:24px"><svg width="24" height="24" viewBox="0 0 24 24"><path d="M1.5 21V7.5Q1.5 6 3 6H8L10 8.5H17Q18.5 8.5 18.5 10V12" fill="#f3d35a" stroke="#8a6d14" stroke-width="1"/><path d="M1.5 21L5.5 12.5H23L18.5 21Z" fill="#f7dc4e" stroke="#8a6d14" stroke-width="1"/><path d="M5.5 13.5H21.5L18 20.5H2.5Z" fill="#e9bf2a" opacity=".55"/><path d="M13 6Q17 2 21 5.5" fill="none" stroke="#111" stroke-width="1.6"/><path d="M22.5 8.5L17.8 7.2L21.8 3.2Z" fill="#111"/></svg></div>
<div style="left:38px;top:48px;width:24px;height:24px"><svg width="24" height="24" viewBox="0 0 24 24"><rect x="0.5" y="2" width="23" height="20" fill="#1d3fae"/><rect x="1" y="5.5" width="22" height="13" fill="#f7ecc0"/><rect x="4.5" y="6" width="15" height="6" fill="#9fd4ee"/><circle cx="15.5" cy="9" r="1.8" fill="#f5e35a"/><path d="M4.5 18V12Q8 9.5 11 12T19.5 11.5V18Z" fill="#e39a22"/><path d="M4.5 18V15Q9 12.5 13 15T19.5 14.5V18Z" fill="#f0b948"/><rect x="1" y="5.5" width="3" height="13" fill="#e9a63a"/><rect x="20" y="5.5" width="3" height="13" fill="#e9a63a"/><path d="M2 3.5H22M2 20.5H22" stroke="#dfe6ff" stroke-width="1.2" stroke-dasharray="1.2 1.6"/></svg></div>
<div style="left:69px;top:48px;width:24px;height:24px"><svg width="24" height="24" viewBox="0 0 24 24"><path d="M1.5 1.5H20L22.5 4V22.5H1.5Z" fill="#2a62c9" stroke="#123a8c"/><rect x="5" y="1.5" width="14" height="11.5" fill="#fff"/><path d="M5 3H19M5 6.6H19M5 10.2H19" stroke="#c5232b" stroke-width="2"/><rect x="6.5" y="16" width="11" height="6.5" fill="#d9dde6"/><rect x="8" y="17" width="3.2" height="5.5" fill="#111"/><rect x="11.2" y="18.5" width="2.5" height="4" fill="#fff"/></svg></div>
<div style="left:100px;top:48px;width:24px;height:24px"><svg width="24" height="24" viewBox="0 0 24 24"><path d="M3 3.5Q8 7 12 11.5Q15.5 6.5 20.5 2.5L22 4.5Q17 9 14.5 13.5Q18 17.5 21.5 21L18.8 22.5Q15.5 18.5 12.3 15.5Q9 19.5 5.5 23L2.8 21.5Q6.5 17 9.8 13Q6 8.5 1.8 5.5Z" fill="#d62a2a" stroke="#981616" stroke-width=".8"/></svg></div>
<div style="left:131px;top:46px;width:2px;height:28px;border-left:1px solid #808080;border-right:1px solid #fff"></div>
<div style="left:139px;top:48px;width:24px;height:24px"><svg width="24" height="24" viewBox="0 0 24 24"><g fill="none" stroke="#9a9a9a" stroke-width="1.5"><path d="M8 2L14.5 16M16 2L9.5 16"/><ellipse cx="7.5" cy="19" rx="2.6" ry="3.2" transform="rotate(25 7.5 19)"/><ellipse cx="16.5" cy="19" rx="2.6" ry="3.2" transform="rotate(-25 16.5 19)"/></g><path d="M8 2L12 11L16 2L12 8Z" fill="#c8c8c8"/></svg></div>
<div style="left:170px;top:48px;width:24px;height:24px"><svg width="24" height="24" viewBox="0 0 24 24"><path d="M2.5 1.5H10L13.5 5V14.5H2.5Z" fill="#fff" stroke="#7a8798"/><path d="M4.5 5.5H9M4.5 8H11M4.5 10.5H11" stroke="#5b6b82"/><path d="M9.5 8.5H17.5L21.5 12.5V22.5H9.5Z" fill="#cfe4fb" stroke="#3f6fb5"/><path d="M12 13.5H18M12 16H19M12 18.5H19" stroke="#2f62b8" stroke-width="1.2"/></svg></div>
<div style="left:201px;top:48px;width:24px;height:24px"><svg width="24" height="24" viewBox="0 0 24 24"><rect x="1.5" y="3.5" width="17" height="19" rx="1" fill="#f1d35c" stroke="#8a6d14"/><rect x="6" y="1.5" width="8" height="4.5" rx="1" fill="#6a6f78" stroke="#33363b"/><rect x="3.5" y="7" width="13" height="13.5" fill="#fbf3c6"/><path d="M10.5 11.5H19L22.5 15V22.5H10.5Z" fill="#cfe4fb" stroke="#3f6fb5"/><path d="M12.5 16H19M12.5 18.5H20" stroke="#2f62b8" stroke-width="1.2"/></svg></div>
<div style="left:232px;top:48px;width:24px;height:24px"><svg width="24" height="24" viewBox="0 0 24 24"><path d="M5 10Q12 2 17.5 7.5Q21 12 14 21.5L11.5 20Q17 12 14.5 9.5Q11.5 7 7.5 12.5Z" fill="#c4c4c4" stroke="#9b9b9b"/><path d="M2.5 6.5L11 13.5L3.5 15.5Z" fill="#c4c4c4" stroke="#9b9b9b"/></svg></div>
<div style="left:263px;top:46px;width:2px;height:28px;border-left:1px solid #808080;border-right:1px solid #fff"></div>
<div style="left:271px;top:48px;width:24px;height:24px"><svg width="24" height="24" viewBox="0 0 24 24"><defs><radialGradient id="ig" cx=".4" cy=".3" r=".8"><stop offset="0" stop-color="#7fb2f5"/><stop offset="1" stop-color="#164fb5"/></radialGradient></defs><circle cx="12" cy="12" r="10.5" fill="#2f6fd8" stroke="#0f3c94"/><circle cx="12" cy="12" r="9.5" fill="none" stroke="#8fbcf5" stroke-width=".8" opacity=".7"/><circle cx="12" cy="6.8" r="1.9" fill="#fff"/><rect x="10.3" y="10" width="3.4" height="8.5" rx=".6" fill="#fff"/></svg></div>
<div style="left:302px;top:48px;width:24px;height:24px"><svg width="24" height="24" viewBox="0 0 24 24"><path d="M15 15L21.5 21.5" stroke="#c99a1e" stroke-width="3.6" stroke-linecap="round"/><path d="M15 15L21.5 21.5" stroke="#f0cf58" stroke-width="1.6" stroke-linecap="round"/><circle cx="10" cy="10" r="8" fill="#dcecfb" stroke="#3568b8" stroke-width="1.8"/><path d="M6 10H14" stroke="#1c4fb0" stroke-width="2.4"/><path d="M10 6V14" stroke="#1c4fb0" stroke-width="2.4"/></svg></div>
<div style="left:333px;top:48px;width:24px;height:24px"><svg width="24" height="24" viewBox="0 0 24 24"><path d="M15 15L21.5 21.5" stroke="#c99a1e" stroke-width="3.6" stroke-linecap="round"/><path d="M15 15L21.5 21.5" stroke="#f0cf58" stroke-width="1.6" stroke-linecap="round"/><circle cx="10" cy="10" r="8" fill="#dcecfb" stroke="#3568b8" stroke-width="1.8"/><path d="M6 10H14" stroke="#1c4fb0" stroke-width="2.4"/></svg></div>
<div style="left:364px;top:48px;width:24px;height:24px"><svg width="24" height="24" viewBox="0 0 24 24"><path d="M1.5 12L11.5 3V8H22.5V16H11.5V21Z" fill="#3d7be0" stroke="#173f98" stroke-linejoin="round"/><path d="M4 12L10.5 6V9.5H21.5" fill="none" stroke="#9cc3fa" stroke-width="1"/></svg></div>
<div style="left:395px;top:48px;width:24px;height:24px"><svg width="24" height="24" viewBox="0 0 24 24"><path d="M22.5 12L12.5 3V8H1.5V16H12.5V21Z" fill="#3d7be0" stroke="#173f98" stroke-linejoin="round"/><path d="M2.5 9.5H13.5V6L20 12" fill="none" stroke="#9cc3fa" stroke-width="1"/></svg></div>
<div style="left:426px;top:48px;width:24px;height:24px"><svg width="24" height="24" viewBox="0 0 24 24"><g fill="#ececec" stroke="#9a9a9a"><rect x="1.5" y="1.5" width="16" height="17" rx="2"/><rect x="3.5" y="3.5" width="16" height="17" rx="2"/><rect x="5.5" y="5.5" width="16" height="17" rx="2"/></g><path d="M12 20V13H9L13.5 7.5L18 13H15V20Z" fill="#a0a0a0" stroke="#8a8a8a" stroke-width=".6"/></svg></div>
<div style="left:457px;top:48px;width:24px;height:24px"><svg width="24" height="24" viewBox="0 0 24 24"><g fill="#ececec" stroke="#9a9a9a"><rect x="1.5" y="1.5" width="16" height="17" rx="2"/><rect x="3.5" y="3.5" width="16" height="17" rx="2"/><rect x="5.5" y="5.5" width="16" height="17" rx="2"/></g><path d="M12 8V15H9L13.5 20.5L18 15H15V8Z" fill="#a0a0a0" stroke="#8a8a8a" stroke-width=".6"/></svg></div>
<div class="sunk2" style="left:486px;top:46px;width:77px;height:26px;background:#fff;text-align:center;font-size:12.5px;line-height:21px">32/52</div>
<div style="left:569px;top:48px;width:24px;height:24px"><svg width="24" height="24" viewBox="0 0 24 24"><path d="M3.5 20.5L17 6" stroke="#2c5aa8" stroke-width="4.4" stroke-linecap="round"/><path d="M3.5 20.500L17 6" stroke="#cfe2fa" stroke-width="2.400" stroke-linecap="round"/><path d="M15 7.500Q13 3 17.500 1L18.200 1.600L16.800 4.800L19.300 6.800L22 4.800L22.800 5.600Q22.500 10.500 17.500 9.500Z" fill="#cfe2fa" stroke="#2c5aa8" stroke-width="1"/><path d="M7 17Q10 21.500 6 23.500L5 22.800L6.300 20L4 18L1.500 20L.8 19.200Q.8 14.500 5 15.200Z" fill="#cfe2fa" stroke="#2c5aa8" stroke-width="1"/><path d="M3 3L11 11.500" stroke="#3c4c78" stroke-width="1.600"/><path d="M1.300 2.800Q1 1 2.800 1.300L6 4.500L4.500 6Z" fill="#9cbcf0" stroke="#2c5aa8" stroke-width=".9"/><path d="M11.500 14.500L14.500 11.500L22.300 19.300Q23 21.500 21.500 22.500Q20 23.300 19 22Z" fill="#e2b82c" stroke="#7a5a10" stroke-width="1"/><path d="M13.500 13.500L21 21" stroke="#f6e27a" stroke-width="1.200"/></svg></div>
<div style="left:601px;top:48px;width:24px;height:24px"><svg width="24" height="24" viewBox="0 0 24 24"><path d="M2.200 5.500Q4 4 6 6.500L8.300 8.300Q8.800 5 10.500 3Q12.500 1.500 13.600 4L14.200 8Q16.500 9.500 17.600 8L17.500 4.500Q18.500 2 20.500 3Q22.200 4.500 21.200 8L20.600 13Q23.300 17 22.300 21Q20.500 24 15 23.500Q12 23 11.500 19.600Q7 21.600 3 20.200Q0.500 18.600 1.500 16.600Q4 14.800 9 15Q7.500 12 6 10.200Q3 8.200 2.200 5.500Z" fill="#e0161c"/><path d="M12 12Q16 10.500 19 13Q21 17 19.500 21Q16 22.500 13.500 20Q12 16 12 12Z" fill="#f43a3a" opacity=".7"/><path d="M3 17Q6 15.800 9 16.500Q6 18.500 3.500 18.500Z" fill="#f65050" opacity=".7"/><path d="M19 4Q20 3.300 20.500 5L20 8.500L18.800 8.500Z" fill="#f65050" opacity=".7"/><path d="M5.200 9.800Q9 6.500 13.400 7.300L13.200 10Q9.500 10.500 7.200 13Q5.500 12 5.200 9.800Z" fill="#16100e"/><ellipse cx="7.600" cy="10.800" rx="1.300" ry=".9" fill="#e8efe8" transform="rotate(-25 7.600 10.800)"/><ellipse cx="10.900" cy="8.900" rx="1.300" ry=".9" fill="#e8efe8" transform="rotate(-20 10.900 8.900)"/></svg></div>
<div style="left:4px;top:78px;width:623px;height:470px;background:#000;border:1px solid;border-color:#808080 #fff #fff #808080;overflow:hidden">
<div style="left:1px;top:79px;width:619px;height:311px;background:#a0a0a0;overflow:hidden"><div style="left:0;top:0px;width:619px;height:38px;background:rgba(0,0,0,.03)"></div><div style="left:0;top:38px;width:619px;height:26px;background:rgba(255,255,255,.04)"></div><div style="left:0;top:150px;width:619px;height:60px;background:rgba(255,255,255,.03)"></div><div style="left:0;top:262px;width:619px;height:49px;background:rgba(0,0,0,.04)"></div><svg style="left:0;top:0" width="619" height="311"><filter id="wf1" x="0" y="0" width="100%" height="100%"><feTurbulence type="fractalNoise" baseFrequency="0.05 0.45" numOctaves="2" seed="3"/><feColorMatrix type="matrix" values="0 0 0 0 0  0 0 0 0 0  0 0 0 0 0  1.4 0 0 0 -0.42"/></filter><rect width="100%" height="100%" filter="url(#wf1)" opacity="0.06"/></svg><div style="left:0;top:0;width:619px;height:311px;border:1px solid rgba(215,215,215,.5)"></div><div style="left:16px;top:43px;width:84px;height:56px;background:#a9a9a9"></div><div style="left:0;top:133px;width:127px;height:16px;background:rgba(255,255,255,.07)"></div><div style="left:0;top:149px;width:127px;height:1px;background:rgba(255,255,255,.22)"></div><svg style="left:435px;top:29px" width="66" height="82" viewBox="0 0 66 82" fill="none" stroke="rgba(110,110,110,.85)"><rect x="39.500" y="1.500" width="24" height="79" rx="12" stroke-width="2.600"/><path d="M8.500 26Q3 40 8.500 54Q12.500 57.500 16.500 54.500Q20.500 57.500 24.500 54.500Q28.500 57.500 32.500 54Q38 40 32.500 26Q28.500 22.500 24.500 25.500Q20.500 22.500 16.500 25.500Q12.500 22.500 8.500 26Z" stroke-width="2.600"/><text x="20.500" y="51.500" text-anchor="middle" font-family="Liberation Sans,sans-serif" font-weight="bold" font-size="32" fill="rgba(110,110,110,.85)" stroke-width=".5">S</text></svg><div class="t" style="left:475.5px;top:102px;transform:rotate(-90deg);transform-origin:0 0;font-family:'Liberation Serif',serif;font-weight:bold;font-size:16px;line-height:16px;color:rgba(110,110,110,.85);letter-spacing:.2px">SENDRA</div><div class="t" style="left:490px;top:89px;transform:rotate(-90deg);transform-origin:0 0;font-family:'Liberation Sans',sans-serif;font-weight:bold;font-size:5px;line-height:5px;color:rgba(110,110,110,.85);letter-spacing:.2px">HANDMADE</div></div>
</div>
<div class="cell" style="left:4px;top:551px;width:111px;font-size:10.3px">1600 x 804 x 24 BPP</div>
<div class="cell" style="left:118px;top:551px;width:39px;font-size:10.6px">32/52</div>
<div class="cell" style="left:160px;top:551px;width:39px;font-size:10.6px">39 %</div>
<div class="cell" style="left:202px;top:551px;width:109px;font-size:10.5px">301.09 KB / 3.68 MB</div>
<div class="cell" style="left:314px;top:551px;width:124px;font-size:11.3px">02/06/2011 / 15:14:25</div>
<div class="cell" style="left:440px;top:551px;width:187px;font-size:11px"></div>
<svg style="left:613px;top:554px" width="13" height="13" viewBox="0 0 13 13"><path d="M12 1L1 12M12 5L5 12M12 9L9 12" stroke="#808080" stroke-width="1.4"/><path d="M13 1L2 12M13 5L6 12M13 9L10 12" stroke="#fff" stroke-width="1"/></svg>
</div>
<!-- Taskbar -->
<div id="taskbar" style="left:0;top:1006px;width:1680px;height:42px;background:#d4d0c8;border-top:1px solid #fff;box-shadow:0 -1px #d4d0c8">
  <div class="btn" style="left:3px;top:3px;width:51px;height:39px">
    <svg style="left:1px;top:9px" width="16" height="16" viewBox="0 0 16 16"><path d="M1 3.5Q4 1.5 7 3L6 8Q3.5 6.5 0.5 8.5Z" fill="#e8542a"/><path d="M8 3.2Q11 4.5 14.5 2.5L13.5 7.5Q10.500 9.500 7 8Z" fill="#6cb83a"/><path d="M0.300 9.500Q3.300 7.500 5.800 9L4.800 14Q2.500 12.500 -0.500 14.500Z" fill="#3a8ae0"/><path d="M6.800 9.200Q9.800 10.500 13.300 8.500L12.300 13.500Q9.300 15.500 5.800 14Z" fill="#f0b828"/></svg>
    <div class="t" style="left:17px;top:11px;font-weight:bold;font-size:12px;letter-spacing:.1px">Start</div>
  </div>
  <!-- explorer -->
  <div class="btn" style="left:63px;top:3px;width:48px;height:39px">
    <svg style="left:8px;top:3px" width="32" height="32" viewBox="0 0 32 32"><path d="M1 6H9L11 8H28V27H1Z" fill="#f4dc8c" stroke="#c8a848"/><path d="M7 3H15L17 5H31V22H7Z" fill="#f8e8a8" stroke="#c8a848"/><rect x="9" y="2" width="3" height="2" fill="#3a9a3a"/><rect x="12" y="4" width="3" height="2" fill="#d84a2a"/><rect x="20" y="5" width="3" height="2" fill="#3a9a9a"/><path d="M4 16Q4 14 6 14H25Q27 14 27 16V27H21V22H10V27H4Z" fill="#9cd0f0" stroke="#5a9ac8"/><rect x="5" y="18" width="21" height="2" fill="#c8e8fa"/></svg>
  </div>
  <!-- opera -->
  <div class="btn" style="left:113px;top:3px;width:48px;height:39px">
    <svg style="left:8px;top:1px" width="32" height="34" viewBox="0 0 32 34"><ellipse cx="16" cy="17" rx="14.5" ry="16" fill="#d8141c"/><ellipse cx="13" cy="10" rx="8" ry="6" fill="#f06060" opacity=".45"/><ellipse cx="16" cy="17" rx="5.600" ry="11.500" fill="#d4d0c8"/></svg>
  </div>
  <!-- c4d -->
  <div class="btn" style="left:163px;top:3px;width:48px;height:39px">
    <svg style="left:8px;top:1px" width="32" height="34" viewBox="0 0 32 34"><path d="M5 6Q16 -2 27 8Q33 20 24 30Q14 36 5 28" fill="none" stroke="#8890a8" stroke-width="3.5"/><circle cx="15" cy="18" r="11.500" fill="#1c3cc0"/><circle cx="11" cy="13" r="5" fill="#5a7af0" opacity=".6"/><path d="M5 22Q14 26 26 20" stroke="#0c1c70" stroke-width="1" fill="none"/><circle cx="7" cy="7" r="2" fill="#4a6ad8"/></svg>
  </div>
  <!-- gimp -->
  <div class="btn" style="left:213px;top:3px;width:48px;height:39px">
    <svg style="left:7px;top:4px" width="34" height="30" viewBox="0 0 34 30"><path d="M6 8Q14 4 20 8L27 1L29 14Q28 22 18 22Q8 22 4 16Z" fill="#8a8478" stroke="#4a463c"/><path d="M1 12Q0 8 5 9Q9 10 8 14Q5 17 1 12Z" fill="#1a1a1a"/><circle cx="13" cy="11" r="2.600" fill="#fff"/><circle cx="13.500" cy="11.300" r="1.200" fill="#111"/><circle cx="20" cy="11" r="2.600" fill="#fff"/><circle cx="20.500" cy="11.300" r="1.200" fill="#111"/><path d="M14 18Q18 21 23 18L30 25L32 27" stroke="#6a6458" stroke-width="1.600" fill="none"/><path d="M27 22L33 28" stroke="#c8c0a8" stroke-width="2"/></svg>
  </div>
  <!-- vlc -->
  <svg style="left:272px;top:6px" width="30" height="32" viewBox="0 0 30 32"><path d="M12.500 1H17.500L25 26H5Z" fill="#f08a18"/><path d="M10.500 8H19.500L21.300 14H8.700Z" fill="#f4f4f4"/><path d="M7.200 19H22.800L24.300 24H5.700Z" fill="#f4f4f4"/><path d="M2 25H28L29 31H1Z" fill="#f09a20"/><path d="M12.500 1H15L15 26H5Z" fill="#fff" opacity=".18"/></svg>
  <!-- irfan (pressed) -->
  <div style="left:313px;top:3px;width:39px;height:39px;background:#fff;border:1px solid;border-color:#404040 #fff #fff #404040;box-shadow:inset 1px 1px #808080">
    <svg style="left:3px;top:2px" width="32" height="34" viewBox="0 0 32 34"><path d="M2 4L6 3L8 6L11 5L12 2L15 3L14 8L17 10L22 6L24 2L28 3L28 7L25 10L22 14L26 15L31 14L32 18L30 20L26 19L24 22L27 26L31 27L32 30L30 32L27 31L27 34H22L21 30L18 26L14 28L13 32L10 34L7 33L8 29L10 25L8 21L3 22L1 20L1 17L6 15L8 12L6 9L2 8Z" fill="#f00808"/><path d="M3 5L10 9L12 6L8 5Z" fill="#200404"/><circle cx="6.500" cy="6.500" r=".9" fill="#fff"/><circle cx="9.500" cy="7.500" r=".9" fill="#fff"/></svg>
  </div>
  <div style="left:353px;top:5px;width:2px;height:36px;border-left:1px dotted #808080"></div>
  <div style="left:357px;top:5px;width:2px;height:36px;border-left:1px dotted #808080"></div>
  <!-- tray -->
  <div class="t" style="left:1475px;top:14px;font-size:11px">IT</div>
  <div style="left:1491px;top:6px;width:2px;height:34px;border-left:1px solid #808080;border-right:1px solid #fff"></div>
  <div style="left:1496px;top:3px;width:184px;height:39px;border:1px solid;border-color:#808080 #fff #fff #808080"></div>
  <svg style="left:1502px;top:15px" width="7" height="9" viewBox="0 0 7 9"><path d="M.5 4L3.500 1L6.500 4M.5 8L3.500 5L6.500 8" stroke="#000" stroke-width="1.300" fill="none"/></svg>
  <svg style="left:1518px;top:12px" width="18" height="18" viewBox="0 0 18 18"><path d="M2 2V17" stroke="#667" stroke-width="1.400"/><path d="M3 3Q7 1 10 3T16 3V10Q13 12 10 10T3 10Z" fill="#f4f4f8" stroke="#99a" stroke-width=".8"/><circle cx="11.500" cy="12.500" r="4.300" fill="#e02a2a" stroke="#901010" stroke-width=".6"/><path d="M9.700 10.700L13.300 14.300M13.300 10.700L9.700 14.300" stroke="#fff" stroke-width="1.400"/></svg>
  <svg style="left:1543px;top:14px" width="16" height="14" viewBox="0 0 16 14"><g fill="#f4f4f4" stroke="#555" stroke-width="1"><rect x=".5" y="10" width="2.500" height="3.500"/><rect x="4" y="7.500" width="2.500" height="6"/><rect x="7.500" y="5" width="2.500" height="8.500"/><rect x="11" y="2" width="2.800" height="11.500"/></g></svg>
  <svg style="left:1566px;top:12px" width="17" height="17" viewBox="0 0 17 17"><path d="M1 6H4L8 2V15L4 11H1Z" fill="#f0f0f0" stroke="#666" stroke-width="1"/><path d="M10.500 5.500Q12.500 8.500 10.500 11.500M12.800 3.500Q16 8.500 12.800 13.500" stroke="#777" stroke-width="1.200" fill="none"/></svg>
  <div class="t" style="left:1594px;top:8px;width:61px;text-align:center;font-size:11.5px;line-height:15px">15:19<br>02/06/2011</div>
  <svg style="left:1660px;top:17px" width="16" height="14" viewBox="0 0 16 14"><rect x=".5" y=".5" width="15" height="10" fill="#2a6ad8" stroke="#8ab"/><rect x="2" y="2" width="12" height="5" fill="#5a9af0"/><rect x="5" y="11" width="6" height="2" fill="#99a"/></svg>
</div>
</body></html>
